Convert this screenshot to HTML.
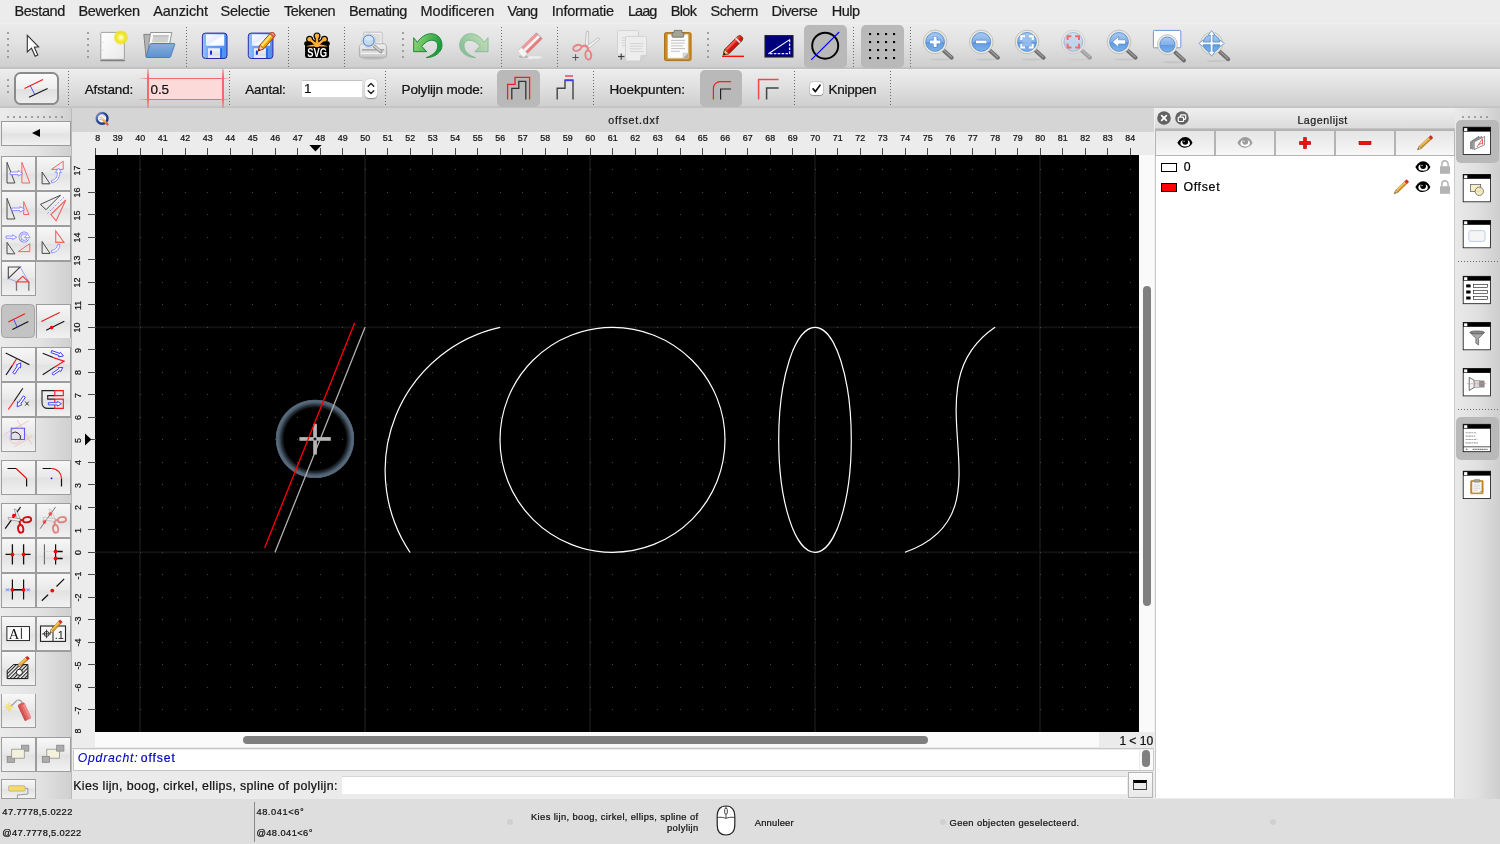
<!DOCTYPE html><html><head><meta charset="utf-8"><title>QCAD offset.dxf</title><style>
*{box-sizing:border-box;margin:0;padding:0}
html,body{width:1500px;height:844px;overflow:hidden;background:#ececec;font-family:"Liberation Sans",sans-serif;color:#111}
.a{position:absolute}
.t{position:absolute;white-space:nowrap;line-height:1;-webkit-text-stroke:0.22px currentColor;font-family:"Liberation Sans",sans-serif}
svg{position:absolute;overflow:visible}
.vsep{position:absolute;width:1px;background-image:linear-gradient(#6a6a6a 1px,transparent 1px);background-size:1px 3px}
.hsep{position:absolute;height:1px;background-image:linear-gradient(90deg,#6a6a6a 1px,transparent 1px);background-size:3px 1px}
.gd{position:absolute;width:2px;height:2px;background:#9a9a9a;border-radius:0.5px}
.tb{position:absolute;background:linear-gradient(#f6f6f6,#e6e6e6 50%,#dedede 52%,#ececec);border:1px solid #a9a9a9}

.tbf{position:absolute;background:linear-gradient(#f7f7f7,#e9e9e9 48%,#e2e2e2 52%,#f1f1f1)}
.chk{position:absolute;background:#b9b9b9;border-radius:5px}
</style></head><body><div id="root" style="position:absolute;left:0;top:0;width:1500px;height:844px;will-change:transform;transform:translateZ(0)">
<div class="a" style="left:0;top:0;width:1500px;height:23px;background:#ececec"></div>
<span class="t" style="left:14.40px;top:3.73px;font-size:14.5px;letter-spacing:-0.378px;color:#1c1c1c;">Bestand</span>
<span class="t" style="left:78.60px;top:3.73px;font-size:14.5px;letter-spacing:-0.445px;color:#1c1c1c;">Bewerken</span>
<span class="t" style="left:153.20px;top:3.73px;font-size:14.5px;letter-spacing:-0.102px;color:#1c1c1c;">Aanzicht</span>
<span class="t" style="left:220.60px;top:3.73px;font-size:14.5px;letter-spacing:-0.302px;color:#1c1c1c;">Selectie</span>
<span class="t" style="left:284.00px;top:3.73px;font-size:14.5px;letter-spacing:-0.561px;color:#1c1c1c;">Tekenen</span>
<span class="t" style="left:349.00px;top:3.73px;font-size:14.5px;letter-spacing:-0.409px;color:#1c1c1c;">Bemating</span>
<span class="t" style="left:420.60px;top:3.73px;font-size:14.5px;letter-spacing:-0.121px;color:#1c1c1c;">Modificeren</span>
<span class="t" style="left:507.60px;top:3.73px;font-size:14.5px;letter-spacing:-0.787px;color:#1c1c1c;">Vang</span>
<span class="t" style="left:551.80px;top:3.73px;font-size:14.5px;letter-spacing:-0.247px;color:#1c1c1c;">Informatie</span>
<span class="t" style="left:627.90px;top:3.73px;font-size:14.5px;letter-spacing:-0.922px;color:#1c1c1c;">Laag</span>
<span class="t" style="left:670.80px;top:3.73px;font-size:14.5px;letter-spacing:-0.671px;color:#1c1c1c;">Blok</span>
<span class="t" style="left:710.40px;top:3.73px;font-size:14.5px;letter-spacing:-0.423px;color:#1c1c1c;">Scherm</span>
<span class="t" style="left:771.60px;top:3.73px;font-size:14.5px;letter-spacing:-0.493px;color:#1c1c1c;">Diverse</span>
<span class="t" style="left:831.70px;top:3.73px;font-size:14.5px;letter-spacing:-0.486px;color:#1c1c1c;">Hulp</span>
<div class="a" style="left:0;top:23px;width:1500px;height:43.5px;background:linear-gradient(#f1f1f1,#ebebeb 3%,#e2e2e2 45%,#cecece)"></div><div class="a" style="left:0;top:66.5px;width:1500px;height:2.4px;background:linear-gradient(#c6c6c6,#bdbdbd)"></div>
<div class="a" style="left:0;top:68.9px;width:1500px;height:36.8px;background:linear-gradient(#f6f6f6,#ececec 3%,#e1e1e1 45%,#cfcfcf)"></div><div class="a" style="left:0;top:105.6px;width:1500px;height:2.4px;background:linear-gradient(#c9c9c9,#c1c1c1)"></div>
<div class="gd" style="left:7px;top:32px"></div>
<div class="gd" style="left:7px;top:38px"></div>
<div class="gd" style="left:7px;top:44px"></div>
<div class="gd" style="left:7px;top:50px"></div>
<div class="gd" style="left:7px;top:56px"></div>
<div class="gd" style="left:87px;top:32px"></div>
<div class="gd" style="left:87px;top:38px"></div>
<div class="gd" style="left:87px;top:44px"></div>
<div class="gd" style="left:87px;top:50px"></div>
<div class="gd" style="left:87px;top:56px"></div>
<div class="gd" style="left:402px;top:32px"></div>
<div class="gd" style="left:402px;top:38px"></div>
<div class="gd" style="left:402px;top:44px"></div>
<div class="gd" style="left:402px;top:50px"></div>
<div class="gd" style="left:402px;top:56px"></div>
<div class="gd" style="left:707px;top:32px"></div>
<div class="gd" style="left:707px;top:38px"></div>
<div class="gd" style="left:707px;top:44px"></div>
<div class="gd" style="left:707px;top:50px"></div>
<div class="gd" style="left:707px;top:56px"></div>
<div class="vsep" style="left:186px;top:27px;height:40px"></div>
<div class="vsep" style="left:288px;top:27px;height:40px"></div>
<div class="vsep" style="left:344px;top:27px;height:40px"></div>
<div class="vsep" style="left:501px;top:27px;height:40px"></div>
<div class="vsep" style="left:557px;top:27px;height:40px"></div>
<div class="vsep" style="left:853px;top:27px;height:40px"></div>
<div class="vsep" style="left:910px;top:27px;height:40px"></div>
<div class="chk" style="left:804px;top:25px;width:43px;height:43px"></div>
<div class="chk" style="left:861px;top:25px;width:43px;height:43px"></div>
<svg style="left:0;top:0" width="1500" height="70" viewBox="0 0 1500 70">
<defs>
<linearGradient id="gPage" x1="0" y1="0" x2="1" y2="1"><stop offset="0" stop-color="#ffffff"/><stop offset="1" stop-color="#e9e9e9"/></linearGradient>
<radialGradient id="gGlow"><stop offset="0" stop-color="#ffffff"/><stop offset="0.25" stop-color="#fbf68a"/><stop offset="0.6" stop-color="#efe61c"/><stop offset="0.85" stop-color="#ece22a" stop-opacity="0.75"/><stop offset="1" stop-color="#ece22a" stop-opacity="0"/></radialGradient>
<linearGradient id="gFold" x1="0" y1="0" x2="0" y2="1"><stop offset="0" stop-color="#88b0dc"/><stop offset="1" stop-color="#5c90d0"/></linearGradient>
<linearGradient id="gFloppy" x1="0" y1="0" x2="1" y2="0"><stop offset="0" stop-color="#9cc4fa"/><stop offset="0.25" stop-color="#6aa6f6"/><stop offset="1" stop-color="#4e8ef0"/></linearGradient>
<linearGradient id="gLabel" x1="0" y1="0" x2="1" y2="1"><stop offset="0" stop-color="#ffffff"/><stop offset="0.45" stop-color="#e4ecff"/><stop offset="0.6" stop-color="#ffffff"/><stop offset="1" stop-color="#eef2ff"/></linearGradient>
<linearGradient id="gShut" x1="0" y1="0" x2="0" y2="1"><stop offset="0" stop-color="#f4f4f8"/><stop offset="0.7" stop-color="#dcdce4"/><stop offset="1" stop-color="#f0f0f4"/></linearGradient>
<linearGradient id="gPencil" x1="0" y1="0" x2="0" y2="1"><stop offset="0" stop-color="#ffe060"/><stop offset="0.45" stop-color="#ffc010"/><stop offset="1" stop-color="#f08a00"/></linearGradient>
<linearGradient id="gUndo" x1="0" y1="0" x2="1" y2="0.3"><stop offset="0" stop-color="#9ad878"/><stop offset="0.5" stop-color="#5cbc5c"/><stop offset="1" stop-color="#1f9a40"/></linearGradient>
<linearGradient id="gLens" x1="0" y1="0" x2="0" y2="1"><stop offset="0" stop-color="#a9caf0"/><stop offset="0.5" stop-color="#82b0e8"/><stop offset="0.5" stop-color="#5f98dc"/><stop offset="1" stop-color="#7cb2ee"/></linearGradient>
<linearGradient id="gLensD" x1="0" y1="0" x2="0" y2="1"><stop offset="0" stop-color="#cfdcf0"/><stop offset="0.5" stop-color="#bccdea"/><stop offset="0.5" stop-color="#a9bfe4"/><stop offset="1" stop-color="#bcd0ee"/></linearGradient>
<linearGradient id="gPrn" x1="0" y1="0" x2="0" y2="1"><stop offset="0" stop-color="#f2f2f2"/><stop offset="1" stop-color="#c9c9c9"/></linearGradient>
<linearGradient id="gRedP" x1="0" y1="0" x2="0" y2="1"><stop offset="0" stop-color="#ff5a4a"/><stop offset="0.5" stop-color="#e01818"/><stop offset="1" stop-color="#b01010"/></linearGradient>
</defs>
<path d="M27.3 35.4 L27.3 52 L31.5 48.2 L35.2 56.3 L37.8 55.1 L34.3 47.3 L38.6 46.9 Z" fill="#fff" stroke="#333" stroke-width="1.1" stroke-linejoin="miter"/>
<rect x="100.8" y="32.4" width="23.6" height="27" rx="1" fill="url(#gPage)" stroke="#9a9a9a" stroke-width="0.9"/>
<path d="M100.5 59.9 Q100.6 60.6 101.5 60.6 L123.6 60.6 Q124.6 60.6 124.7 59.9" stroke="#808080" stroke-width="1.2" fill="none"/>
<path d="M102.3 42.3h1.2M102.3 49.8h1.2" stroke="#ccc" stroke-width="0.7"/>
<circle cx="120.9" cy="37.5" r="7.6" fill="url(#gGlow)"/>
<path d="M143.8 34.4 L150 34.4 L151 36 L160 36 L160 56.6 L146 56.6 Z" fill="#b4b4b4" stroke="#7a7a7a" stroke-width="0.9"/>
<path d="M150.6 32.5 L171.8 32.5 L169.6 43.6 L151.5 43.6 L147.2 55.5 Z" fill="#fafafa" stroke="#8a8a8a" stroke-width="0.9"/>
<path d="M153.2 35.5 L169 35.5 L167.6 42.6 L151.9 42.6 Z" fill="#d0d0d0"/><path d="M153 35.9h15.6" stroke="#bdbdbd" stroke-width="1.6"/>
<path d="M151.2 43.6 L174.2 43.6 Q175 43.6 174.7 44.6 L170.6 56.6 Q170.3 57.5 169.4 57.5 L146.8 57.5 Q145.8 57.5 146.2 56.5 L150 44.4 Q150.3 43.6 151.2 43.6 Z" fill="url(#gFold)" stroke="#3f78bf" stroke-width="0.9"/>
<rect x="202.4" y="33.1" width="24.6" height="25.4" rx="3" fill="url(#gFloppy)" stroke="#2a2aa4" stroke-width="1"/>
<rect x="206.0" y="34.300000000000004" width="18.2" height="11.4" fill="url(#gLabel)"/>
<rect x="208.0" y="48.3" width="12" height="9.6" fill="url(#gShut)"/>
<rect x="210.0" y="50.400000000000006" width="2" height="4.3" rx="0.6" fill="#0a34dc"/>
<rect x="220.20000000000002" y="48.3" width="1.8" height="9.6" fill="#2c66ee"/>
<rect x="248.3" y="33.1" width="24.6" height="25.4" rx="3" fill="url(#gFloppy)" stroke="#2a2aa4" stroke-width="1"/>
<rect x="251.9" y="34.300000000000004" width="18.2" height="11.4" fill="url(#gLabel)"/>
<rect x="253.9" y="48.3" width="12" height="9.6" fill="url(#gShut)"/>
<rect x="255.9" y="50.400000000000006" width="2" height="4.3" rx="0.6" fill="#0a34dc"/>
<rect x="266.1" y="48.3" width="1.8" height="9.6" fill="#2c66ee"/>
<g transform="translate(258.3,50.9) rotate(-48.5)"><path d="M0 0 L5.2 -2.7 L21.2 -2.7 Q23.6 -2.7 23.6 0 Q23.6 2.7 21.2 2.7 L5.2 2.7 Z" fill="url(#gPencil)" stroke="#b2331a" stroke-width="0.9" stroke-linejoin="round"/><path d="M0 0 L5.2 -2.7 L5.2 2.7 Z" fill="#f3d8b0" stroke="#b2331a" stroke-width="0.8" stroke-linejoin="round"/><path d="M0 0 L2 -1 L2 1 Z" fill="#222"/><path d="M20.4 -2.7 L20.4 2.7 M21.2 -2.7 Q23.6 -2.7 23.6 0 Q23.6 2.7 21.2 2.7 Z" fill="#e8a0a0" stroke="#c03a28" stroke-width="0.8"/><path d="M6 -0.6 L20 -0.6" stroke="#fff4a8" stroke-width="1"/></g>
<path d="M317 45 L317 35.9" stroke="#000" stroke-width="4.6" stroke-linecap="round"/><circle cx="317" cy="35.9" r="3.5" fill="#000"/>
<path d="M317 45 L309.6 39.2" stroke="#000" stroke-width="4.6" stroke-linecap="round"/><circle cx="309.6" cy="39.2" r="3.5" fill="#000"/>
<path d="M317 45 L324.4 39.2" stroke="#000" stroke-width="4.6" stroke-linecap="round"/><circle cx="324.4" cy="39.2" r="3.5" fill="#000"/>
<path d="M317 45 L306.4 43.6 M317 45 L327.6 43.6" stroke="#000" stroke-width="4.6" stroke-linecap="round"/>
<rect x="305" y="43.8" width="24" height="14.3" rx="2.4" fill="#000"/>
<path d="M317 45.4 L317 35.9" stroke="#fbb034" stroke-width="2.4" stroke-linecap="round"/><circle cx="317" cy="35.9" r="2.3" fill="#fbb034"/>
<path d="M317 45.4 L309.6 39.2" stroke="#fbb034" stroke-width="2.4" stroke-linecap="round"/><circle cx="309.6" cy="39.2" r="2.3" fill="#fbb034"/>
<path d="M317 45.4 L324.4 39.2" stroke="#fbb034" stroke-width="2.4" stroke-linecap="round"/><circle cx="324.4" cy="39.2" r="2.3" fill="#fbb034"/>
<path d="M306.8 45.9 Q312 44.2 317 44.2 Q322 44.2 327.2 45.9 L327.2 46.4 L306.8 46.4 Z" fill="#fbb034"/><circle cx="317" cy="44.6" r="2.6" fill="#fbb034"/>
<text transform="translate(307.3 57) scale(0.7 1)" font-family="Liberation Sans, sans-serif" font-weight="bold" font-size="13.4" fill="#fff">SVG</text>
<rect x="363.8" y="32.2" width="18.4" height="13" rx="0.8" fill="#f3f3f3" stroke="#b4b4b4" stroke-width="0.8"/>
<rect x="372.5" y="34" width="8" height="8.5" fill="#dedede"/>
<path d="M361.6 43.8 L384.4 43.8 Q386.6 45 386.6 47.5 L386.6 55.5 Q386.6 57.3 384.8 57.3 L361.2 57.3 Q359.4 57.3 359.4 55.5 L359.4 47.5 Q359.4 45 361.6 43.8 Z" fill="url(#gPrn)" stroke="#a9a9a9" stroke-width="0.9"/>
<path d="M362 49.8 L384 49.8" stroke="#a8a8a8" stroke-width="1.6"/><path d="M361 53.3 L385 53.3" stroke="#f6f6f6" stroke-width="1.2"/>
<ellipse cx="373" cy="58.6" rx="11" ry="1" fill="#999" opacity="0.45"/>
<path d="M373.8 45.8 L380.8 51.9" stroke="#999" stroke-width="3.2" stroke-linecap="round"/><path d="M374.4 46 L380.4 51.3" stroke="#dadada" stroke-width="1.2" stroke-linecap="round"/>
<circle cx="368.7" cy="40.7" r="7.1" fill="#ececec" stroke="#b8b8b8" stroke-width="0.5"/><circle cx="368.7" cy="40.7" r="5.5" fill="#c6d8ec" stroke="#5a8fd2" stroke-width="1.2"/><path d="M364.2 39.5 A4.6 4.6 0 0 1 373.2 39.5 Q369 41.8 364.2 39.5Z" fill="#dbe8f4" opacity="0.8"/>
<path d="M413.7 37.7 L417.3 42.3 C421 37 426 33.7 431 33.7 C438 33.7 442 39 442 45.3 C442 52 435 57.5 426.3 57.6 C433 55.5 437.7 51 437.7 46 C437.7 42 435 40.3 431.7 40.3 C428 40.3 424.5 43 421.7 46.3 L426.7 51.7 L413.7 51.7 Z" fill="url(#gUndo)" stroke="#178a38" stroke-width="1" stroke-linejoin="round"/>
<g transform="translate(901.7 0) scale(-1 1)" opacity="0.42"><path d="M413.7 37.7 L417.3 42.3 C421 37 426 33.7 431 33.7 C438 33.7 442 39 442 45.3 C442 52 435 57.5 426.3 57.6 C433 55.5 437.7 51 437.7 46 C437.7 42 435 40.3 431.7 40.3 C428 40.3 424.5 43 421.7 46.3 L426.7 51.7 L413.7 51.7 Z" fill="url(#gUndo)" stroke="#178a38" stroke-width="1" stroke-linejoin="round"/></g>
<ellipse cx="530" cy="57.4" rx="12.5" ry="1.5" fill="#fff" opacity="0.55"/><ellipse cx="523.5" cy="56.9" rx="5" ry="1.3" fill="#999" opacity="0.6"/>
<g transform="translate(520.5,54.3) rotate(-44.5)"><rect x="0" y="-4.4" width="26.4" height="8.8" rx="0.8" fill="#e28080"/><rect x="0" y="-4.4" width="26.4" height="3" fill="#ea9a9a"/><rect x="0" y="-1.4" width="26.4" height="2.9" fill="#f3f3f3"/><rect x="0" y="-4.4" width="5.4" height="8.8" fill="#f4f4f4" stroke="#cfcfcf" stroke-width="0.5"/><path d="M26.4 -4.4 L26.4 4.4" stroke="#a0a0a0" stroke-width="0.9"/></g>
<path d="M585.2 47 L586.4 31.6 L588.4 31 L588.3 47 Z" fill="#f2f2f2" stroke="#b0b0b0" stroke-width="0.7"/>
<path d="M587.2 45.8 L598.6 37.6 L599.6 39.4 L588.4 48.6 Z" fill="#f2f2f2" stroke="#b0b0b0" stroke-width="0.7"/>
<ellipse cx="577.3" cy="47.8" rx="4.3" ry="2.7" transform="rotate(-22 577.3 47.8)" fill="none" stroke="#e58686" stroke-width="2"/>
<ellipse cx="588.3" cy="55" rx="2.9" ry="4.6" transform="rotate(-6 588.3 55)" fill="none" stroke="#e58686" stroke-width="2"/>
<path d="M581.4 46.4 L585.6 45.6 L587.6 47.4 L588.6 51" stroke="#e58686" stroke-width="2.2" fill="none" stroke-linejoin="round"/>
<path d="M572.4 57.5h6.4M575.6 54.3v6.4" stroke="#444" stroke-width="0.9"/>
<path d="M618.5 30.5 L637.5 30.5 Q638.5 30.5 638.5 31.5 L638.5 49.1 L632.5 55.1 L618.5 55.1 Q617.5 55.1 617.5 54.1 L617.5 31.5 Q617.5 30.5 618.5 30.5 Z" fill="#ededed" stroke="#cdcdcd" stroke-width="0.8"/>
<path d="M638.5 49.1 L632.5 55.1 L632.9 49.5 Z" fill="#d2d2d2" stroke="#c4c4c4" stroke-width="0.5"/>
<path d="M621.9 37.70h14" stroke="#d3d3d3" stroke-width="1"/>
<path d="M621.9 40.35h13" stroke="#d3d3d3" stroke-width="1"/>
<path d="M621.9 43.00h12" stroke="#d3d3d3" stroke-width="1"/>
<path d="M621.9 45.65h14" stroke="#d3d3d3" stroke-width="1"/>
<path d="M626.5 36.4 L645.5 36.4 Q646.5 36.4 646.5 37.4 L646.5 55.0 L640.5 61.0 L626.5 61.0 Q625.5 61.0 625.5 60.0 L625.5 37.4 Q625.5 36.4 626.5 36.4 Z" fill="#ededed" stroke="#cdcdcd" stroke-width="0.8"/>
<path d="M646.5 55.0 L640.5 61.0 L640.9 55.4 Z" fill="#d2d2d2" stroke="#c4c4c4" stroke-width="0.5"/>
<path d="M629.9 43.60h14" stroke="#d3d3d3" stroke-width="1"/>
<path d="M629.9 46.25h13" stroke="#d3d3d3" stroke-width="1"/>
<path d="M629.9 48.90h12" stroke="#d3d3d3" stroke-width="1"/>
<path d="M629.9 51.55h14" stroke="#d3d3d3" stroke-width="1"/>
<path d="M618 56.6h6.4M621.2 53.4v6.4" stroke="#333" stroke-width="1"/>
<rect x="664.5" y="32.6" width="26.6" height="28" rx="1.6" fill="#c98a22" stroke="#a86c12" stroke-width="0.9"/>
<path d="M667.8 34.4 L688.2 34.4 L688.2 58.2 L667.8 58.2 Z" fill="#fbfbfb" stroke="#d8d8d8" stroke-width="0.5"/>
<path d="M688.2 53 L683 58.2 L688.2 58.2 Z" fill="#aaa"/><path d="M683 53 L688.2 53 L683 58.2 Z" fill="#d9d9d9" stroke="#bbb" stroke-width="0.4"/>
<path d="M671 40.40h14" stroke="#bcbcbc" stroke-width="0.9"/>
<path d="M671 43.12h13.6" stroke="#bcbcbc" stroke-width="0.9"/>
<path d="M671 45.84h12" stroke="#bcbcbc" stroke-width="0.9"/>
<path d="M671 48.56h14" stroke="#bcbcbc" stroke-width="0.9"/>
<path d="M671 51.28h9" stroke="#bcbcbc" stroke-width="0.9"/>
<path d="M674.2 30.4 L681.8 30.4 L681.8 32.2 L683.8 32.8 L683.8 36.2 Q683.8 37.2 682.8 37.2 L673 37.2 Q672 37.2 672 36.2 L672 32.8 L674.2 32.2 Z" fill="#a4a496" stroke="#66665c" stroke-width="0.8"/>
<path d="M722 56.3 L744 56.3" stroke="#ff0000" stroke-width="1.3"/>
<g transform="translate(723.3,55) rotate(-45)"><path d="M0 0 L5 -3.1 L23 -3.1 Q26.2 -3.1 26.2 0 Q26.2 3.1 23 3.1 L5 3.1 Z" fill="url(#gRedP)" stroke="#6a4a18" stroke-width="0.9" stroke-linejoin="round"/><path d="M0 0 L5 -3.1 L5 3.1 Z" fill="#ebc08a" stroke="#6a4a18" stroke-width="0.8" stroke-linejoin="round"/><path d="M0 0 L2.2 -1.3 L2.2 1.3 Z" fill="#111"/><rect x="19.6" y="-3.1" width="2" height="6.2" fill="#d8d8d8"/><path d="M6 -1.3 L19 -1.3" stroke="#ff8a7a" stroke-width="0.9"/></g>
<rect x="765" y="35.6" width="28" height="21.4" fill="#00007c" stroke="#222" stroke-width="1.1"/>
<path d="M768.4 53.7 L789.6 39.6" stroke="#fff" stroke-width="1.1"/><path d="M789.6 39.6 L789.6 53.7 L768.4 53.7" stroke="#e8e8ff" stroke-width="1.3" stroke-dasharray="2.6 1.3" fill="none"/>
<circle cx="825.2" cy="45.7" r="13" fill="none" stroke="#000" stroke-width="1.9"/>
<path d="M811.2 59.8 L839.2 32" stroke="#0000ff" stroke-width="1.1"/>
<rect x="869" y="33" width="2.1" height="2.1" fill="#000"/>
<rect x="869" y="41" width="2.1" height="2.1" fill="#000"/>
<rect x="869" y="49" width="2.1" height="2.1" fill="#000"/>
<rect x="869" y="57" width="2.1" height="2.1" fill="#000"/>
<rect x="877" y="33" width="2.1" height="2.1" fill="#000"/>
<rect x="877" y="41" width="2.1" height="2.1" fill="#000"/>
<rect x="877" y="49" width="2.1" height="2.1" fill="#000"/>
<rect x="877" y="57" width="2.1" height="2.1" fill="#000"/>
<rect x="885" y="33" width="2.1" height="2.1" fill="#000"/>
<rect x="885" y="41" width="2.1" height="2.1" fill="#000"/>
<rect x="885" y="49" width="2.1" height="2.1" fill="#000"/>
<rect x="885" y="57" width="2.1" height="2.1" fill="#000"/>
<rect x="893" y="33" width="2.1" height="2.1" fill="#000"/>
<rect x="893" y="41" width="2.1" height="2.1" fill="#000"/>
<rect x="893" y="49" width="2.1" height="2.1" fill="#000"/>
<rect x="893" y="57" width="2.1" height="2.1" fill="#000"/>
<g><ellipse cx="940.1" cy="59.5" rx="10" ry="1.1" fill="#888" opacity="0.18"/>
<path d="M943.1 49.9 L951.7 57.7" stroke="#6e6e6e" stroke-width="4" stroke-linecap="round"/><path d="M944.1 50.3 L951.3000000000001 56.9" stroke="#9a9a9a" stroke-width="1.4" stroke-linecap="round"/>
<circle cx="935.1" cy="41.9" r="10.700000000000001" fill="none" stroke="#e9e9e2" stroke-width="2.2"/><circle cx="935.1" cy="41.9" r="11.8" fill="none" stroke="#a8a8a0" stroke-width="0.6"/>
<circle cx="935.1" cy="41.9" r="9.4" fill="url(#gLens)" stroke="#4a86d0" stroke-width="0.8"/></g>
<path d="M929.6 41.9h11M935.1 36.4v11" stroke="#3f7fd0" stroke-width="4.4"/><path d="M929.9 41.9h10.4M935.1 36.7v10.4" stroke="#fff" stroke-width="3"/>
<g><ellipse cx="986.3" cy="59.5" rx="10" ry="1.1" fill="#888" opacity="0.18"/>
<path d="M989.3 49.9 L997.9 57.7" stroke="#6e6e6e" stroke-width="4" stroke-linecap="round"/><path d="M990.3 50.3 L997.5 56.9" stroke="#9a9a9a" stroke-width="1.4" stroke-linecap="round"/>
<circle cx="981.3" cy="41.9" r="10.700000000000001" fill="none" stroke="#e9e9e2" stroke-width="2.2"/><circle cx="981.3" cy="41.9" r="11.8" fill="none" stroke="#a8a8a0" stroke-width="0.6"/>
<circle cx="981.3" cy="41.9" r="9.4" fill="url(#gLens)" stroke="#4a86d0" stroke-width="0.8"/></g>
<path d="M975.6 41.9h11.4" stroke="#3f7fd0" stroke-width="4.2"/><path d="M976 41.9h10.6" stroke="#fff" stroke-width="2.8"/>
<g><ellipse cx="1032" cy="59.5" rx="10" ry="1.1" fill="#888" opacity="0.18"/>
<path d="M1035 49.9 L1043.6 57.7" stroke="#6e6e6e" stroke-width="4" stroke-linecap="round"/><path d="M1036 50.3 L1043.2 56.9" stroke="#9a9a9a" stroke-width="1.4" stroke-linecap="round"/>
<circle cx="1027" cy="41.9" r="10.700000000000001" fill="none" stroke="#e9e9e2" stroke-width="2.2"/><circle cx="1027" cy="41.9" r="11.8" fill="none" stroke="#a8a8a0" stroke-width="0.6"/>
<circle cx="1027" cy="41.9" r="9.4" fill="url(#gLens)" stroke="#4a86d0" stroke-width="0.8"/></g>
<rect x="1022.6" y="37.5" width="8.8" height="8.8" fill="#9cc0ee" opacity="0.8"/>
<path d="M1021.3 40v-3.8h3.8 M1032.7 40v-3.8h-3.8 M1021.3 43.8v3.8h3.8 M1032.7 43.8v3.8h-3.8" stroke="#fff" stroke-width="2" fill="none"/>
<g opacity="0.55"><ellipse cx="1078.3" cy="59.5" rx="10" ry="1.1" fill="#888" opacity="0.18"/>
<path d="M1081.3 49.9 L1089.8999999999999 57.7" stroke="#6e6e6e" stroke-width="4" stroke-linecap="round"/><path d="M1082.3 50.3 L1089.5 56.9" stroke="#9a9a9a" stroke-width="1.4" stroke-linecap="round"/>
<circle cx="1073.3" cy="41.9" r="10.700000000000001" fill="none" stroke="#e9e9e2" stroke-width="2.2"/><circle cx="1073.3" cy="41.9" r="11.8" fill="none" stroke="#a8a8a0" stroke-width="0.6"/>
<circle cx="1073.3" cy="41.9" r="9.4" fill="url(#gLensD)" stroke="#4a86d0" stroke-width="0.8"/></g>
<rect x="1069" y="37.6" width="8.6" height="8.6" fill="#c4d4ee" opacity="0.8"/>
<path d="M1067.6 40.1v-3.8h3.8 M1079 40.1v-3.8h-3.8 M1067.6 43.7v3.8h3.8 M1079 43.7v3.8h-3.8" stroke="#f06a6a" stroke-width="2" fill="none"/>
<g><ellipse cx="1124" cy="59.5" rx="10" ry="1.1" fill="#888" opacity="0.18"/>
<path d="M1127 49.9 L1135.6 57.7" stroke="#6e6e6e" stroke-width="4" stroke-linecap="round"/><path d="M1128 50.3 L1135.2 56.9" stroke="#9a9a9a" stroke-width="1.4" stroke-linecap="round"/>
<circle cx="1119" cy="41.9" r="10.700000000000001" fill="none" stroke="#e9e9e2" stroke-width="2.2"/><circle cx="1119" cy="41.9" r="11.8" fill="none" stroke="#a8a8a0" stroke-width="0.6"/>
<circle cx="1119" cy="41.9" r="9.4" fill="url(#gLens)" stroke="#4a86d0" stroke-width="0.8"/></g>
<path d="M1112.4 41.9 L1118.6 36.6 L1118.6 39.8 L1125.6 39.8 L1125.6 44 L1118.6 44 L1118.6 47.2 Z" fill="#fff" stroke="#3f7fd0" stroke-width="0.6"/>
<rect x="1153.4" y="30.4" width="27.4" height="17.4" rx="1" fill="#fff" stroke="#5a8fd6" stroke-width="0.9"/>
<g><ellipse cx="1172.4" cy="62.2" rx="10" ry="1.1" fill="#888" opacity="0.18"/>
<path d="M1175.4 52.6 L1184.0 60.400000000000006" stroke="#6e6e6e" stroke-width="4" stroke-linecap="round"/><path d="M1176.4 53.0 L1183.6000000000001 59.6" stroke="#9a9a9a" stroke-width="1.4" stroke-linecap="round"/>
<circle cx="1167.4" cy="44.6" r="8.9" fill="none" stroke="#e9e9e2" stroke-width="2.2"/><circle cx="1167.4" cy="44.6" r="10.0" fill="none" stroke="#a8a8a0" stroke-width="0.6"/>
<circle cx="1167.4" cy="44.6" r="7.6" fill="url(#gLens)" stroke="#4a86d0" stroke-width="0.8"/></g>
<g><ellipse cx="1216.6" cy="61.0" rx="10" ry="1.1" fill="#888" opacity="0.18"/>
<path d="M1219.6 51.4 L1228.1999999999998 59.2" stroke="#6e6e6e" stroke-width="4" stroke-linecap="round"/><path d="M1220.6 51.8 L1227.8 58.4" stroke="#9a9a9a" stroke-width="1.4" stroke-linecap="round"/>
<circle cx="1211.6" cy="43.4" r="9.9" fill="none" stroke="#e9e9e2" stroke-width="2.2"/><circle cx="1211.6" cy="43.4" r="11.0" fill="none" stroke="#a8a8a0" stroke-width="0.6"/>
<circle cx="1211.6" cy="43.4" r="8.6" fill="url(#gLens)" stroke="#4a86d0" stroke-width="0.8"/></g>
<path d="M1211.6 30.6 L1215 35.2 L1212.9 35.2 L1212.9 42.1 L1219.8 42.1 L1219.8 40 L1224.4 43.4 L1219.8 46.8 L1219.8 44.7 L1212.9 44.7 L1212.9 51.6 L1215 51.6 L1211.6 56.2 L1208.2 51.6 L1210.3 51.6 L1210.3 44.7 L1203.4 44.7 L1203.4 46.8 L1198.8 43.4 L1203.4 40 L1203.4 42.1 L1210.3 42.1 L1210.3 35.2 L1208.2 35.2 Z" fill="#fff" stroke="#4a86d0" stroke-width="0.7"/>
</svg>
<div class="gd" style="left:7px;top:79px"></div>
<div class="gd" style="left:7px;top:85px"></div>
<div class="gd" style="left:7px;top:91px"></div>
<div class="vsep" style="left:68px;top:71px;height:35px"></div>
<div class="vsep" style="left:229px;top:71px;height:35px"></div>
<div class="vsep" style="left:385px;top:71px;height:35px"></div>
<div class="vsep" style="left:593px;top:71px;height:35px"></div>
<div class="vsep" style="left:794px;top:71px;height:35px"></div>
<div class="vsep" style="left:890px;top:71px;height:35px"></div>
<div class="a" style="left:14px;top:72px;width:45px;height:33px;border:2.2px solid #8b8b8b;border-radius:6.5px;background:linear-gradient(#fbfbfb,#eeeeee 50%,#e0e0e0 52%,#ededed)"></div>
<span class="t" style="left:84.70px;top:82.77px;font-size:13.5px;letter-spacing:-0.129px;color:#111;">Afstand:</span>
<div class="a" style="left:148px;top:78px;width:75px;height:21px;background:#fddada"></div>
<div class="a" style="left:138px;top:77.5px;width:93px;height:1.5px;background:linear-gradient(90deg,rgba(240,80,80,0),#f26a6a 12%,#f26a6a 88%,rgba(240,80,80,0))"></div>
<div class="a" style="left:138px;top:98.5px;width:93px;height:1.5px;background:linear-gradient(90deg,rgba(240,80,80,0),#f26a6a 12%,#f26a6a 88%,rgba(240,80,80,0))"></div>
<div class="a" style="left:147.3px;top:69px;width:1.5px;height:39px;background:linear-gradient(rgba(240,80,80,0.3),#f26a6a 22%,#f26a6a 78%,rgba(240,80,80,0.3))"></div>
<div class="a" style="left:222.3px;top:69px;width:1.5px;height:39px;background:linear-gradient(rgba(240,80,80,0.3),#f26a6a 22%,#f26a6a 78%,rgba(240,80,80,0.3))"></div>
<span class="t" style="left:150.60px;top:82.77px;font-size:13.5px;letter-spacing:-0.183px;color:#111;">0.5</span>
<span class="t" style="left:245.30px;top:82.77px;font-size:13.5px;letter-spacing:-0.251px;color:#111;">Aantal:</span>
<div class="a" style="left:301.5px;top:79.5px;width:60.5px;height:17px;background:#fff;border-top:1px solid #c2c2c2"></div>
<span class="t" style="left:304.00px;top:81.97px;font-size:13.5px;letter-spacing:-4.008px;color:#111;">1</span>
<div class="a" style="left:365px;top:78.5px;width:12px;height:19px;background:#fff;border-radius:4px;box-shadow:0 0.5px 1px rgba(0,0,0,.35)"></div>
<svg style="left:365px;top:78.5px" width="12" height="19"><path d="M3.2 7.2 L6 4.4 L8.8 7.2 M3.2 11.8 L6 14.6 L8.8 11.8" fill="none" stroke="#222" stroke-width="1.4" stroke-linecap="round" stroke-linejoin="round"/></svg>
<span class="t" style="left:401.60px;top:82.77px;font-size:13.5px;letter-spacing:-0.178px;color:#111;">Polylijn mode:</span>
<div class="chk" style="left:497px;top:70px;width:43px;height:36.5px"></div>
<span class="t" style="left:609.40px;top:82.77px;font-size:13.5px;letter-spacing:-0.091px;color:#111;">Hoekpunten:</span>
<div class="chk" style="left:699.5px;top:70px;width:42.5px;height:36.5px"></div>
<div class="a" style="left:809.5px;top:81.5px;width:13px;height:13px;background:#fff;border-radius:3px;box-shadow:0 0 0 0.5px rgba(0,0,0,.18),0 0.5px 1px rgba(0,0,0,.25)"></div>
<svg style="left:809.5px;top:81.5px" width="13" height="13"><path d="M3.1 6.9 L5.4 9.6 L10 3.2" fill="none" stroke="#111" stroke-width="1.7" stroke-linecap="round" stroke-linejoin="round"/></svg>
<span class="t" style="left:828.60px;top:82.77px;font-size:13.5px;letter-spacing:-0.251px;color:#111;">Knippen</span>
<svg style="left:0;top:0" width="900" height="110" viewBox="0 0 900 110">
<path d="M24.5 88.6 L43 79.6" stroke="#f01818" stroke-width="1.1"/><path d="M29 97.2 L47.6 88.6" stroke="#111" stroke-width="1.1"/><path d="M30.2 85.6 L34.6 94.2" stroke="#3c3cff" stroke-width="0.9"/>
<path d="M507.6 99.4 L507.6 84.4 L515 84.4 L515 77.4 L529.6 77.4 L529.6 99.4" fill="none" stroke="#f02020" stroke-width="1.3"/>
<path d="M511.8 99.4 L511.8 88.3 L518.8 88.3 L518.8 81.3 L525.8 81.3 L525.8 99.4" fill="none" stroke="#333" stroke-width="1.3"/>
<path d="M557.2 99.4 L557.2 88.3 L565 88.3 L565 80.4 M573 80.4 L573 99.4" fill="none" stroke="#444" stroke-width="1.4"/>
<path d="M564.4 80.2 L573.6 80.2" stroke="#3c3cff" stroke-width="2"/><path d="M565 76 L573 76" stroke="#f05050" stroke-width="1.6"/>
<path d="M713.4 99.4 L713.4 88.4 A6.8 6.8 0 0 1 720.2 81.6 L731 81.6" fill="none" stroke="#f02020" stroke-width="1.2"/>
<path d="M720.6 99.4 L720.6 89 L731 89" fill="none" stroke="#222" stroke-width="1.2"/>
<path d="M758.6 99.4 L758.6 79.6 L778.6 79.6" fill="none" stroke="#f04848" stroke-width="1.5"/>
<path d="M766.6 99.4 L766.6 88 L778.6 88" fill="none" stroke="#444" stroke-width="1.5"/>
</svg>
<div class="a" style="left:0;top:108px;width:72px;height:691px;background:linear-gradient(90deg,#ebebeb,#e2e2e2 55%,#cfcfcf)"></div>
<div class="a" style="left:71px;top:108px;width:1px;height:691px;background:#b9b9b9"></div>
<div class="gd" style="left:6.5px;top:116px"></div>
<div class="gd" style="left:12.6px;top:116px"></div>
<div class="gd" style="left:18.6px;top:116px"></div>
<div class="gd" style="left:24.6px;top:116px"></div>
<div class="gd" style="left:30.7px;top:116px"></div>
<div class="gd" style="left:36.8px;top:116px"></div>
<div class="gd" style="left:42.8px;top:116px"></div>
<div class="gd" style="left:48.9px;top:116px"></div>
<div class="gd" style="left:54.9px;top:116px"></div>
<div class="gd" style="left:60.9px;top:116px"></div>
<div class="a" style="left:1px;top:120.5px;width:70.4px;height:25.2px;background:#9b9b9b"></div><div class="tbf" style="left:2.1px;top:121.6px;width:68.2px;height:23px"></div>
<svg style="left:31px;top:128px" width="10" height="10"><path d="M1 5 L9 1 L9 9 Z" fill="#000"/></svg>
<div class="a" style="left:1.1px;top:155.8px;width:70.0px;height:35.5px;background:#9d9d9d"></div>
<div class="a" style="left:1.1px;top:191.0px;width:70.0px;height:35.5px;background:#9d9d9d"></div>
<div class="a" style="left:1.1px;top:226.2px;width:70.0px;height:35.5px;background:#9d9d9d"></div>
<div class="a" style="left:1.1px;top:261.4px;width:35.0px;height:34.9px;background:#9d9d9d"></div>
<div class="tbf" style="left:2.1px;top:156.7px;width:32.9px;height:33.1px"></div>
<div class="tbf" style="left:37.0px;top:156.7px;width:32.9px;height:33.1px"></div>
<div class="tbf" style="left:2.1px;top:191.9px;width:32.9px;height:33.1px"></div>
<div class="tbf" style="left:37.0px;top:191.9px;width:32.9px;height:33.1px"></div>
<div class="tbf" style="left:2.1px;top:227.1px;width:32.9px;height:33.1px"></div>
<div class="tbf" style="left:37.0px;top:227.1px;width:32.9px;height:33.1px"></div>
<div class="tbf" style="left:2.1px;top:262.3px;width:32.9px;height:33.1px"></div>
<div class="a" style="left:36.1px;top:303.6px;width:34.9px;height:34.89999999999998px;background:#9d9d9d"></div>
<div class="a" style="left:1.2px;top:303.5px;width:34.2px;height:34.3px;background:#c3c3c3;border:1px solid #a4a4a4;border-radius:4.5px"></div>
<div class="tbf" style="left:37.0px;top:304.5px;width:33.0px;height:33.1px"></div>
<div class="a" style="left:1.1px;top:346.8px;width:70.0px;height:35.5px;background:#9d9d9d"></div>
<div class="a" style="left:1.1px;top:382.0px;width:70.0px;height:35.5px;background:#9d9d9d"></div>
<div class="a" style="left:1.1px;top:417.2px;width:35.0px;height:34.9px;background:#9d9d9d"></div>
<div class="tbf" style="left:2.1px;top:347.7px;width:32.9px;height:33.1px"></div>
<div class="tbf" style="left:37.0px;top:347.7px;width:32.9px;height:33.1px"></div>
<div class="tbf" style="left:2.1px;top:382.9px;width:32.9px;height:33.1px"></div>
<div class="tbf" style="left:37.0px;top:382.9px;width:32.9px;height:33.1px"></div>
<div class="tbf" style="left:2.1px;top:418.1px;width:32.9px;height:33.1px"></div>
<div class="a" style="left:1.1px;top:460.0px;width:70.0px;height:34.9px;background:#9d9d9d"></div>
<div class="tbf" style="left:2.1px;top:460.9px;width:32.9px;height:33.1px"></div>
<div class="tbf" style="left:37.0px;top:460.9px;width:32.9px;height:33.1px"></div>
<div class="a" style="left:1.1px;top:502.8px;width:70.0px;height:35.5px;background:#9d9d9d"></div>
<div class="a" style="left:1.1px;top:538.0px;width:70.0px;height:35.5px;background:#9d9d9d"></div>
<div class="a" style="left:1.1px;top:573.2px;width:70.0px;height:34.9px;background:#9d9d9d"></div>
<div class="tbf" style="left:2.1px;top:503.7px;width:32.9px;height:33.1px"></div>
<div class="tbf" style="left:37.0px;top:503.7px;width:32.9px;height:33.1px"></div>
<div class="tbf" style="left:2.1px;top:538.9px;width:32.9px;height:33.1px"></div>
<div class="tbf" style="left:37.0px;top:538.9px;width:32.9px;height:33.1px"></div>
<div class="tbf" style="left:2.1px;top:574.1px;width:32.9px;height:33.1px"></div>
<div class="tbf" style="left:37.0px;top:574.1px;width:32.9px;height:33.1px"></div>
<div class="a" style="left:1.1px;top:616.2px;width:70.0px;height:35.5px;background:#9d9d9d"></div>
<div class="a" style="left:1.1px;top:651.4px;width:35.0px;height:34.9px;background:#9d9d9d"></div>
<div class="tbf" style="left:2.1px;top:617.1px;width:32.9px;height:33.1px"></div>
<div class="tbf" style="left:37.0px;top:617.1px;width:32.9px;height:33.1px"></div>
<div class="tbf" style="left:2.1px;top:652.3px;width:32.9px;height:33.1px"></div>
<div class="a" style="left:1.1px;top:693.5px;width:35.0px;height:34.9px;background:#9d9d9d"></div>
<div class="tbf" style="left:2.1px;top:694.4px;width:32.9px;height:33.1px"></div>
<div class="a" style="left:1.1px;top:736.8px;width:70.0px;height:34.9px;background:#9d9d9d"></div>
<div class="tbf" style="left:2.1px;top:737.7px;width:32.9px;height:33.1px"></div>
<div class="tbf" style="left:37.0px;top:737.7px;width:32.9px;height:33.1px"></div>
<div class="a" style="left:1.1px;top:779.4px;width:35.0px;height:19.8px;background:#9d9d9d"></div>
<div class="tbf" style="left:2.1px;top:780.3px;width:32.9px;height:18px"></div>
<svg style="left:0;top:0" width="72" height="800" viewBox="0 0 72 800">
<defs>
<linearGradient id="lgPencil" x1="0" y1="0" x2="0" y2="1"><stop offset="0" stop-color="#ffe070"/><stop offset="0.5" stop-color="#f0b030"/><stop offset="1" stop-color="#c88418"/></linearGradient>
<pattern id="hatch" width="2.6" height="2.6" patternUnits="userSpaceOnUse" patternTransform="rotate(-45)"><rect width="2.6" height="2.6" fill="#f4f4f4"/><rect width="2.6" height="1.1" fill="#222"/></pattern>
</defs>
<path d="M7.0 162.3 L7.0 183.0 L14.9 183.0 Z" fill="none" stroke="#4a4a4a" stroke-width="1" stroke-linejoin="miter"/>
<path d="M21.9 162.3 L21.9 183.0 L29.8 183.0 Z" fill="none" stroke="#f46464" stroke-width="1" stroke-linejoin="miter"/>
<path transform="translate(10.2 173.3) rotate(0.0)" d="M0 -1.3 L8.0 -1.3 L8.0 -2.8 L12.6 0 L8.0 2.8 L8.0 1.3 L0 1.3 Z" fill="#fff" stroke="#8484ff" stroke-width="0.9" stroke-linejoin="miter"/>
<path d="M42.1 172.0 L42.1 183.8 L50.0 183.8 Z" fill="none" stroke="#4a4a4a" stroke-width="1" stroke-linejoin="miter"/>
<path d="M51.6 169.4 L63.2 161.2 L63.2 169.4 Z" fill="none" stroke="#f46464" stroke-width="1" stroke-linejoin="miter"/>
<path d="M51.4 180.4 C55.6 180 57.4 177 57.4 172.6 L55.4 172.6 L58.4 168 L61.4 172.6 L59.6 172.6 C59.6 178.4 56.6 182.2 51.6 182.8 Z" fill="#fff" stroke="#8484ff" stroke-width="0.9"/>
<path d="M7.0 198.3 L7.0 219.0 L14.9 219.0 Z" fill="none" stroke="#4a4a4a" stroke-width="1" stroke-linejoin="miter"/>
<path d="M23.7 201.6 L23.7 214.5 L29.0 214.5 Z" fill="none" stroke="#f46464" stroke-width="1" stroke-linejoin="miter"/>
<path transform="translate(11.8 209.3) rotate(0.0)" d="M0 -1.3 L8.2 -1.3 L8.2 -2.8 L12.8 0 L8.2 2.8 L8.2 1.3 L0 1.3 Z" fill="#fff" stroke="#8484ff" stroke-width="0.9" stroke-linejoin="miter"/>
<path d="M40.4 204.4 L60.5 195.2 L46.0 209.7 Z" fill="none" stroke="#4a4a4a" stroke-width="1" stroke-linejoin="miter"/>
<path d="M50.9 214.5 L65.8 200.0 L56.1 220.7 Z" fill="none" stroke="#f46464" stroke-width="1.1" stroke-linejoin="miter"/>
<path d="M47.4 213.6 L64 197" stroke="#8484ff" stroke-width="0.9" stroke-dasharray="2 1.6"/>
<path transform="translate(6.1 237.2) rotate(0.0)" d="M0 -1.1 L6.6 -1.1 L6.6 -2.4 L10.6 0 L6.6 2.4 L6.6 1.1 L0 1.1 Z" fill="#fff" stroke="#8484ff" stroke-width="0.9" stroke-linejoin="miter"/>
<path d="M27.2 234.2 A4.2 4.2 0 1 0 27.9 239" fill="none" stroke="#8484ff" stroke-width="2.6"/><path d="M27.2 234.2 A4.2 4.2 0 1 0 27.9 239" fill="none" stroke="#fff" stroke-width="1"/>
<path d="M24.6 237.6 L27.6 233.6 L30 237.8 Z" fill="#fff" stroke="#8484ff" stroke-width="0.8"/>
<path d="M7.0 242.4 L7.0 253.8 L14.9 253.8 Z" fill="none" stroke="#4a4a4a" stroke-width="1" stroke-linejoin="miter"/>
<path d="M18.2 251.6 L29.8 243.7 L29.8 251.6 Z" fill="none" stroke="#f46464" stroke-width="1" stroke-linejoin="miter"/>
<path d="M42.1 241.5 L42.1 253.4 L50.0 253.4 Z" fill="none" stroke="#4a4a4a" stroke-width="1" stroke-linejoin="miter"/>
<path d="M55.7 231.0 L55.7 242.4 L64.0 242.4 Z" fill="none" stroke="#f46464" stroke-width="1.1" stroke-linejoin="miter"/>
<path d="M51.3 250.4 C55 250.2 57.4 247.8 57.6 244.4 L59.9 244.4 C59.7 249.4 56.3 252.6 51.5 252.8 Z" fill="#fff" stroke="#8484ff" stroke-width="0.9"/>
<path d="M8.3 267.0 L20.2 267.0 L8.3 278.4 Z" fill="none" stroke="#4a4a4a" stroke-width="1.1" stroke-linejoin="miter"/>
<path d="M20.2 267 L28.5 281.5 M8.3 278.4 L16.4 281.6" stroke="#8484ff" stroke-width="0.7"/>
<path d="M16.5 282 L16.5 290.7 M28.8 282 L28.8 290.7" stroke="#757575" stroke-width="1.3"/>
<path d="M16.6 281.9 L22.8 276.4 L28.6 281.9 Z" fill="none" stroke="#f04444" stroke-width="1.25"/>
<path d="M8.3 322 L24.9 313.8" stroke="#f01818" stroke-width="1.1"/><path d="M12.4 329.6 L28.4 321.6" stroke="#111" stroke-width="1.1"/><path d="M13.8 319.5 L17.1 327" stroke="#3c3cff" stroke-width="0.9"/>
<path d="M41.3 321.6 L59.7 312.5" stroke="#f01818" stroke-width="1.1"/><path d="M46.2 330.2 L64.3 321.3" stroke="#111" stroke-width="1.1"/><circle cx="51.6" cy="327.6" r="1.8" fill="#f00"/>
<path d="M5.7 352.9 L29.4 364.7" stroke="#111" stroke-width="1.1"/><path d="M6 375 L12.1 365.9" stroke="#111" stroke-width="1.1"/><path d="M12.1 365.9 L16.6 358.8" stroke="#f01818" stroke-width="1.1"/>
<path transform="translate(13.8 373.4) rotate(-56.6)" d="M0 -1.2 L8.3 -1.2 L8.3 -2.6 L12.7 0 L8.3 2.6 L8.3 1.2 L0 1.2 Z" fill="#fff" stroke="#3c3cff" stroke-width="0.9" stroke-linejoin="miter"/>
<path d="M42.7 353.3 L53.3 357.6" stroke="#111" stroke-width="1.1"/><path d="M53.3 357.6 L64 361.2 L54.8 366.9" stroke="#f01818" stroke-width="1.2" fill="none"/><path d="M54.8 366.9 L42.7 374.7" stroke="#111" stroke-width="1.1"/>
<path transform="translate(51.4 351.6) rotate(20.1)" d="M0 -1.1 L8.6 -1.1 L8.6 -2.4 L12.8 0 L8.6 2.4 L8.6 1.1 L0 1.1 Z" fill="#fff" stroke="#3c3cff" stroke-width="0.9" stroke-linejoin="miter"/>
<path transform="translate(52.6 374.2) rotate(-33.7)" d="M0 -1.1 L8.1 -1.1 L8.1 -2.4 L12.3 0 L8.1 2.4 L8.1 1.1 L0 1.1 Z" fill="#fff" stroke="#3c3cff" stroke-width="0.9" stroke-linejoin="miter"/>
<path d="M22.8 388.2 L14.2 401" stroke="#111" stroke-width="1.1"/><path d="M14.2 401 L8.3 409.5" stroke="#f01818" stroke-width="1.1"/>
<path transform="translate(24.4 396.6) rotate(125.2)" d="M0 -1.2 L8.1 -1.2 L8.1 -2.6 L12.5 0 L8.1 2.6 L8.1 1.2 L0 1.2 Z" fill="#fff" stroke="#3c3cff" stroke-width="0.9" stroke-linejoin="miter"/>
<path d="M25.2 401.6 L28.8 405.6 M28.8 401.6 L25.2 405.6" stroke="#222" stroke-width="0.9"/>
<path d="M54.8 390.6 L42 390.6 L42 402.4 Q42 408.4 48 408.4 L54.8 408.4 M54.8 395.6 L47.7 395.6 L47.7 399.1 L54.8 399.1" fill="none" stroke="#222" stroke-width="1.1"/>
<path d="M54.8 390.6 L63.3 390.6 L63.3 395.6 L54.8 395.6 Z M54.8 399.1 L63.3 399.1 L63.3 408.4 L54.8 408.4 Z" fill="none" stroke="#f01818" stroke-width="1.1"/>
<path transform="translate(48.4 403.8) rotate(0.0)" d="M0 -1.1 L8.9 -1.1 L8.9 -2.4 L13.1 0 L8.9 2.4 L8.9 1.1 L0 1.1 Z" fill="#fff" stroke="#3c3cff" stroke-width="0.9" stroke-linejoin="miter"/>
<g stroke="#f4b4b4" stroke-width="0.7" fill="none"><path d="M4.5 434.2 L29 420.7 M17.2 420 L32 444.6 M14.2 446.9 L32 436.4"/><circle cx="15" cy="438.2" r="5.4"/></g>
<rect x="11.2" y="428.2" width="13.4" height="11.2" fill="none" stroke="#4646ff" stroke-width="0.9"/>
<path d="M11.9 433.2 A5.4 5.4 0 0 1 20.3 439.2" fill="none" stroke="#333" stroke-width="1"/>
<path d="M7.5 468.5 L16.1 468.5 M26.6 478.5 L26.6 486.5" stroke="#111" stroke-width="1.2"/><path d="M16.1 468.5 L26.6 478.5" stroke="#f01010" stroke-width="1.2"/>
<path d="M42.6 468.5 L51.5 468.5 M61.5 478.5 L61.5 486.5" stroke="#111" stroke-width="1.2"/><path d="M51.5 468.5 A10 10 0 0 1 61.5 478.5" stroke="#f01010" stroke-width="1.2" fill="none"/><circle cx="51.5" cy="478.3" r="0.9" fill="#00f"/>
<g transform="translate(0 0)">
<path d="M5.2 528.7 L20.6 507" stroke="#111" stroke-width="1.2"/>
<g opacity="1">
<path d="M14.1 509.2 L15.8 509.1 L20.2 518.8 L17.2 518.2 Z" fill="#f4f4f4" stroke="#777" stroke-width="0.6"/>
<path d="M8 517.3 L20.3 518.8 L19.9 521.4 L8.8 519.7 Z" fill="#f4f4f4" stroke="#777" stroke-width="0.6"/>
<ellipse cx="27.1" cy="519.7" rx="4.1" ry="2.6" transform="rotate(-8 27.1 519.7)" fill="none" stroke="#d01010" stroke-width="1.9"/>
<ellipse cx="20.7" cy="528.8" rx="2.6" ry="3.9" transform="rotate(-10 20.7 528.8)" fill="none" stroke="#d01010" stroke-width="1.9"/>
<path d="M20.2 520 L22.8 520.2 M19.6 521 L20 524.6" stroke="#d01010" stroke-width="2"/>
</g>
<circle cx="13.9" cy="515.7" r="1.9" fill="#f00" opacity="1"/>
</g>
<g transform="translate(34.9 0)">
<path d="M5.2 528.7 L20.6 507" stroke="#555" stroke-width="0.8"/>
<g opacity="0.45">
<path d="M14.1 509.2 L15.8 509.1 L20.2 518.8 L17.2 518.2 Z" fill="#f4f4f4" stroke="#777" stroke-width="0.6"/>
<path d="M8 517.3 L20.3 518.8 L19.9 521.4 L8.8 519.7 Z" fill="#f4f4f4" stroke="#777" stroke-width="0.6"/>
<ellipse cx="27.1" cy="519.7" rx="4.1" ry="2.6" transform="rotate(-8 27.1 519.7)" fill="none" stroke="#d01010" stroke-width="1.9"/>
<ellipse cx="20.7" cy="528.8" rx="2.6" ry="3.9" transform="rotate(-10 20.7 528.8)" fill="none" stroke="#d01010" stroke-width="1.9"/>
<path d="M20.2 520 L22.8 520.2 M19.6 521 L20 524.6" stroke="#d01010" stroke-width="2"/>
</g>
<circle cx="15.4" cy="513.8" r="1.9" fill="#f00" opacity="0.55"/>
<circle cx="9.5" cy="521.9" r="1.9" fill="#f00" opacity="0.55"/>
</g>
<path d="M12.4 544.3 L12.4 564.4 M23.6 544.3 L23.6 564.4 M5.5 554.4 L12.4 554.4 M23.6 554.4 L30.6 554.4" stroke="#111" stroke-width="1.3"/><path d="M12.4 554.4 L23.6 554.4" stroke="#aaa" stroke-width="0.6"/><circle cx="12.4" cy="554.4" r="1.9" fill="#f00"/><circle cx="23.6" cy="554.4" r="1.9" fill="#f00"/>
<path d="M44.4 544.3 L44.4 564.4" stroke="#333" stroke-width="0.8"/><path d="M55.6 544.3 L55.6 564.4" stroke="#111" stroke-width="1.2"/><path d="M55.6 551.4 L62.7 551.4 M55.6 558.5 L62.7 558.5" stroke="#111" stroke-width="1.5"/><path d="M44.4 551.4 L55.6 551.4 M44.4 558.5 L55.6 558.5" stroke="#bbb" stroke-width="0.6" stroke-dasharray="1.2 1"/><circle cx="55.6" cy="551.4" r="1.9" fill="#f00"/><circle cx="55.6" cy="558.5" r="1.9" fill="#f00"/>
<path d="M12.4 579.4 L12.4 599.5 M23.6 579.4 L23.6 599.5" stroke="#111" stroke-width="1.2"/><path d="M12.4 589.8 L23.6 589.8" stroke="#111" stroke-width="1.6"/><circle cx="12.4" cy="589.8" r="1.9" fill="#f00"/><circle cx="23.6" cy="589.8" r="1.9" fill="#f00"/>
<path d="M6 588.2 L9 591.4 M9 588.2 L6 591.4 M5.6 589.8 L10 589.8 M26.6 588.2 L29.6 591.4 M29.6 588.2 L26.6 591.4 M26 589.8 L30.4 589.8" stroke="#6a6aff" stroke-width="0.6"/>
<path d="M41.8 600.7 L48.1 594.8 M56.5 586.5 L64.2 578.8" stroke="#111" stroke-width="1.2"/><circle cx="52.3" cy="590.6" r="1.9" fill="#f00"/>
<rect x="6.9" y="626.6" width="22.6" height="14" fill="#fff" stroke="#111" stroke-width="0.9"/>
<text x="8.8" y="638.9" font-family="Liberation Serif, serif" font-size="14.6" fill="#111">A</text><path d="M21.4 627.8 L21.4 639" stroke="#111" stroke-width="0.9"/>
<rect x="40.5" y="626" width="25" height="15.4" fill="#f6f6f6" stroke="#222" stroke-width="1.1"/><path d="M53 626 L53 641.4" stroke="#222" stroke-width="1"/>
<circle cx="46.6" cy="633.9" r="2.5" fill="none" stroke="#222" stroke-width="0.9"/><path d="M42.2 633.9 L51 633.9 M46.6 629.6 L46.6 638.2" stroke="#222" stroke-width="0.9"/>
<text x="54.8" y="639" font-family="Liberation Sans, sans-serif" font-size="11" fill="#111">.1</text>
<g transform="translate(50 632.8) rotate(-46.7)"><path d="M0 0 L3.4 -1.6 L14.2 -1.6 L14.2 1.6 L3.4 1.6 Z" fill="url(#lgPencil)" stroke="#9a6a20" stroke-width="0.5"/><path d="M14.2 -1.6 L16.2 -1.6 Q16.8 0 16.2 1.6 L14.2 1.6 Z" fill="#e82020" stroke="#a01818" stroke-width="0.4"/><path d="M0 0 L3.4 -1.6 L3.4 1.6 Z" fill="#e8c898" stroke="#8a6a30" stroke-width="0.4"/><path d="M0 0 L1.3 -0.6 L1.3 0.6 Z" fill="#222"/></g>
<path d="M7.2 678.6 L7.2 670.5 L13.5 664.6 L27.9 664.6 L27.9 678.6 Z" fill="url(#hatch)" stroke="#111" stroke-width="1"/>
<circle cx="19.4" cy="672.3" r="3" fill="#fff" stroke="#111" stroke-width="1"/>
<g transform="translate(17.5 666.9) rotate(-41.2)"><path d="M0 0 L3.4 -1.6 L12.4 -1.6 L12.4 1.6 L3.4 1.6 Z" fill="url(#lgPencil)" stroke="#9a6a20" stroke-width="0.5"/><path d="M12.4 -1.6 L14.4 -1.6 Q15.0 0 14.4 1.6 L12.4 1.6 Z" fill="#e82020" stroke="#a01818" stroke-width="0.4"/><path d="M0 0 L3.4 -1.6 L3.4 1.6 Z" fill="#e8c898" stroke="#8a6a30" stroke-width="0.4"/><path d="M0 0 L1.3 -0.6 L1.3 0.6 Z" fill="#222"/></g>
<path d="M22.4 703.4 C21.6 699.6 17.6 699 15.6 701.6 C14.2 703.4 12.4 705.6 9.6 706.6" fill="none" stroke="#9a9a9a" stroke-width="1.1"/>
<g transform="translate(20.9 703.9) rotate(65)"><rect x="0" y="-3.6" width="17.4" height="7.2" rx="1.6" fill="#e46a6a"/><rect x="0" y="-3.6" width="17.4" height="2.4" rx="1.2" fill="#ef8c8c"/><rect x="0" y="1.4" width="17.4" height="2.2" rx="1.1" fill="#c85050"/><ellipse cx="0.6" cy="0" rx="1.2" ry="3.4" fill="#d65a5a"/></g>
<g stroke="#e6d23c" stroke-width="0.9"><path d="M9 702.6 L9 711.4 M4.6 707 L13.4 707 M5.9 703.9 L12.1 710.1 M12.1 703.9 L5.9 710.1"/></g><circle cx="9" cy="707" r="2.2" fill="#f7e27a"/>
<rect x="21.6" y="745.2" width="7.2" height="5.9" fill="#acacac" stroke="#858585" stroke-width="0.8"/>
<rect x="7.2" y="756.4" width="7.2" height="5.9" fill="#acacac" stroke="#858585" stroke-width="0.8"/>
<rect x="11.7" y="749.2" width="12.6" height="9" fill="#f6f1dc" stroke="#93938c" stroke-width="0.8"/>
<rect x="46.8" y="749.2" width="12.6" height="9" fill="#f6f1dc" stroke="#93938c" stroke-width="0.8"/>
<rect x="56.7" y="745.2" width="7.2" height="5.9" fill="#acacac" stroke="#858585" stroke-width="0.8"/>
<rect x="42.3" y="756.4" width="7.2" height="5.9" fill="#acacac" stroke="#858585" stroke-width="0.8"/>
<path d="M25.2 788.4 L27.9 788.4 L27.9 794 L17.4 795 L17.4 799" fill="none" stroke="#999" stroke-width="1"/><rect x="8.5" y="785.7" width="16.7" height="5.4" rx="1.4" fill="#f6da62" stroke="#a8a8a8" stroke-width="0.7"/>
</svg>
<div class="a" style="left:72px;top:108px;width:1082px;height:23.8px;background:#d5d5d5"></div>
<span class="t" style="left:608.30px;top:114.64px;font-size:10.7px;letter-spacing:0.804px;color:#1a1a1a;">offset.dxf</span>
<div class="a" style="left:72px;top:131.8px;width:1082px;height:23.2px;background:#ececec"></div>
<div class="a" style="left:72px;top:155px;width:23px;height:592px;background:#ececec"></div>
<div class="a" style="left:95px;top:132px;width:12px;height:14px;overflow:hidden"><span class="t" style="left:-4.64px;top:2.07px;font-size:8.9px;color:#111">38</span></div>
<span class="t" style="left:112.86px;top:134.07px;font-size:8.9px;color:#111">39</span>
<span class="t" style="left:135.36px;top:134.07px;font-size:8.9px;color:#111">40</span>
<span class="t" style="left:157.86px;top:134.07px;font-size:8.9px;color:#111">41</span>
<span class="t" style="left:180.36px;top:134.07px;font-size:8.9px;color:#111">42</span>
<span class="t" style="left:202.86px;top:134.07px;font-size:8.9px;color:#111">43</span>
<span class="t" style="left:225.36px;top:134.07px;font-size:8.9px;color:#111">44</span>
<span class="t" style="left:247.86px;top:134.07px;font-size:8.9px;color:#111">45</span>
<span class="t" style="left:270.36px;top:134.07px;font-size:8.9px;color:#111">46</span>
<span class="t" style="left:292.86px;top:134.07px;font-size:8.9px;color:#111">47</span>
<span class="t" style="left:315.36px;top:134.07px;font-size:8.9px;color:#111">48</span>
<span class="t" style="left:337.86px;top:134.07px;font-size:8.9px;color:#111">49</span>
<span class="t" style="left:360.36px;top:134.07px;font-size:8.9px;color:#111">50</span>
<span class="t" style="left:382.86px;top:134.07px;font-size:8.9px;color:#111">51</span>
<span class="t" style="left:405.36px;top:134.07px;font-size:8.9px;color:#111">52</span>
<span class="t" style="left:427.86px;top:134.07px;font-size:8.9px;color:#111">53</span>
<span class="t" style="left:450.36px;top:134.07px;font-size:8.9px;color:#111">54</span>
<span class="t" style="left:472.86px;top:134.07px;font-size:8.9px;color:#111">55</span>
<span class="t" style="left:495.36px;top:134.07px;font-size:8.9px;color:#111">56</span>
<span class="t" style="left:517.86px;top:134.07px;font-size:8.9px;color:#111">57</span>
<span class="t" style="left:540.36px;top:134.07px;font-size:8.9px;color:#111">58</span>
<span class="t" style="left:562.86px;top:134.07px;font-size:8.9px;color:#111">59</span>
<span class="t" style="left:585.36px;top:134.07px;font-size:8.9px;color:#111">60</span>
<span class="t" style="left:607.86px;top:134.07px;font-size:8.9px;color:#111">61</span>
<span class="t" style="left:630.36px;top:134.07px;font-size:8.9px;color:#111">62</span>
<span class="t" style="left:652.86px;top:134.07px;font-size:8.9px;color:#111">63</span>
<span class="t" style="left:675.36px;top:134.07px;font-size:8.9px;color:#111">64</span>
<span class="t" style="left:697.86px;top:134.07px;font-size:8.9px;color:#111">65</span>
<span class="t" style="left:720.36px;top:134.07px;font-size:8.9px;color:#111">66</span>
<span class="t" style="left:742.86px;top:134.07px;font-size:8.9px;color:#111">67</span>
<span class="t" style="left:765.36px;top:134.07px;font-size:8.9px;color:#111">68</span>
<span class="t" style="left:787.86px;top:134.07px;font-size:8.9px;color:#111">69</span>
<span class="t" style="left:810.36px;top:134.07px;font-size:8.9px;color:#111">70</span>
<span class="t" style="left:832.86px;top:134.07px;font-size:8.9px;color:#111">71</span>
<span class="t" style="left:855.36px;top:134.07px;font-size:8.9px;color:#111">72</span>
<span class="t" style="left:877.86px;top:134.07px;font-size:8.9px;color:#111">73</span>
<span class="t" style="left:900.36px;top:134.07px;font-size:8.9px;color:#111">74</span>
<span class="t" style="left:922.86px;top:134.07px;font-size:8.9px;color:#111">75</span>
<span class="t" style="left:945.36px;top:134.07px;font-size:8.9px;color:#111">76</span>
<span class="t" style="left:967.86px;top:134.07px;font-size:8.9px;color:#111">77</span>
<span class="t" style="left:990.36px;top:134.07px;font-size:8.9px;color:#111">78</span>
<span class="t" style="left:1012.86px;top:134.07px;font-size:8.9px;color:#111">79</span>
<span class="t" style="left:1035.36px;top:134.07px;font-size:8.9px;color:#111">80</span>
<span class="t" style="left:1057.86px;top:134.07px;font-size:8.9px;color:#111">81</span>
<span class="t" style="left:1080.36px;top:134.07px;font-size:8.9px;color:#111">82</span>
<span class="t" style="left:1102.86px;top:134.07px;font-size:8.9px;color:#111">83</span>
<span class="t" style="left:1125.36px;top:134.07px;font-size:8.9px;color:#111">84</span>
<div class="a" style="left:95px;top:148px;width:1px;height:7px;background:#4a4a4a"></div>
<div class="a" style="left:117px;top:148px;width:1px;height:7px;background:#4a4a4a"></div>
<div class="a" style="left:140px;top:148px;width:1px;height:7px;background:#4a4a4a"></div>
<div class="a" style="left:162px;top:148px;width:1px;height:7px;background:#4a4a4a"></div>
<div class="a" style="left:185px;top:148px;width:1px;height:7px;background:#4a4a4a"></div>
<div class="a" style="left:207px;top:148px;width:1px;height:7px;background:#4a4a4a"></div>
<div class="a" style="left:230px;top:148px;width:1px;height:7px;background:#4a4a4a"></div>
<div class="a" style="left:252px;top:148px;width:1px;height:7px;background:#4a4a4a"></div>
<div class="a" style="left:275px;top:148px;width:1px;height:7px;background:#4a4a4a"></div>
<div class="a" style="left:297px;top:148px;width:1px;height:7px;background:#4a4a4a"></div>
<div class="a" style="left:320px;top:148px;width:1px;height:7px;background:#4a4a4a"></div>
<div class="a" style="left:342px;top:148px;width:1px;height:7px;background:#4a4a4a"></div>
<div class="a" style="left:365px;top:148px;width:1px;height:7px;background:#4a4a4a"></div>
<div class="a" style="left:387px;top:148px;width:1px;height:7px;background:#4a4a4a"></div>
<div class="a" style="left:410px;top:148px;width:1px;height:7px;background:#4a4a4a"></div>
<div class="a" style="left:432px;top:148px;width:1px;height:7px;background:#4a4a4a"></div>
<div class="a" style="left:455px;top:148px;width:1px;height:7px;background:#4a4a4a"></div>
<div class="a" style="left:477px;top:148px;width:1px;height:7px;background:#4a4a4a"></div>
<div class="a" style="left:500px;top:148px;width:1px;height:7px;background:#4a4a4a"></div>
<div class="a" style="left:522px;top:148px;width:1px;height:7px;background:#4a4a4a"></div>
<div class="a" style="left:545px;top:148px;width:1px;height:7px;background:#4a4a4a"></div>
<div class="a" style="left:567px;top:148px;width:1px;height:7px;background:#4a4a4a"></div>
<div class="a" style="left:590px;top:148px;width:1px;height:7px;background:#4a4a4a"></div>
<div class="a" style="left:612px;top:148px;width:1px;height:7px;background:#4a4a4a"></div>
<div class="a" style="left:635px;top:148px;width:1px;height:7px;background:#4a4a4a"></div>
<div class="a" style="left:657px;top:148px;width:1px;height:7px;background:#4a4a4a"></div>
<div class="a" style="left:680px;top:148px;width:1px;height:7px;background:#4a4a4a"></div>
<div class="a" style="left:702px;top:148px;width:1px;height:7px;background:#4a4a4a"></div>
<div class="a" style="left:725px;top:148px;width:1px;height:7px;background:#4a4a4a"></div>
<div class="a" style="left:747px;top:148px;width:1px;height:7px;background:#4a4a4a"></div>
<div class="a" style="left:770px;top:148px;width:1px;height:7px;background:#4a4a4a"></div>
<div class="a" style="left:792px;top:148px;width:1px;height:7px;background:#4a4a4a"></div>
<div class="a" style="left:815px;top:148px;width:1px;height:7px;background:#4a4a4a"></div>
<div class="a" style="left:837px;top:148px;width:1px;height:7px;background:#4a4a4a"></div>
<div class="a" style="left:860px;top:148px;width:1px;height:7px;background:#4a4a4a"></div>
<div class="a" style="left:882px;top:148px;width:1px;height:7px;background:#4a4a4a"></div>
<div class="a" style="left:905px;top:148px;width:1px;height:7px;background:#4a4a4a"></div>
<div class="a" style="left:927px;top:148px;width:1px;height:7px;background:#4a4a4a"></div>
<div class="a" style="left:950px;top:148px;width:1px;height:7px;background:#4a4a4a"></div>
<div class="a" style="left:972px;top:148px;width:1px;height:7px;background:#4a4a4a"></div>
<div class="a" style="left:995px;top:148px;width:1px;height:7px;background:#4a4a4a"></div>
<div class="a" style="left:1017px;top:148px;width:1px;height:7px;background:#4a4a4a"></div>
<div class="a" style="left:1040px;top:148px;width:1px;height:7px;background:#4a4a4a"></div>
<div class="a" style="left:1062px;top:148px;width:1px;height:7px;background:#4a4a4a"></div>
<div class="a" style="left:1085px;top:148px;width:1px;height:7px;background:#4a4a4a"></div>
<div class="a" style="left:1107px;top:148px;width:1px;height:7px;background:#4a4a4a"></div>
<div class="a" style="left:1130px;top:148px;width:1px;height:7px;background:#4a4a4a"></div>
<svg style="left:94px;top:110px" width="18" height="18" viewBox="94 110 18 18"><defs><linearGradient id="qg" x1="0" y1="0" x2="1" y2="1"><stop offset="0" stop-color="#8c9cc8"/><stop offset="0.45" stop-color="#2c4694"/><stop offset="1" stop-color="#1a3484"/></linearGradient></defs><circle cx="102.1" cy="118.4" r="4.4" fill="#f6f6f6"/><path d="M99 117.6 h4 M101.2 115.6 v5" stroke="#bbb" stroke-width="0.6"/><path d="M98.9 119.8 l3 -0.6 M103.4 115.4 l1 1.6" stroke="#e88" stroke-width="0.6"/><circle cx="102.1" cy="118.4" r="5.4" fill="none" stroke="url(#qg)" stroke-width="2.4"/><path d="M102.6 118.9 L106.6 123.4" stroke="#f2a010" stroke-width="2.2" stroke-linecap="butt"/><path d="M102.9 118.9 L106.6 122.8" stroke="#ffd860" stroke-width="0.8"/><path d="M106.4 123.2 L107.6 124.5" stroke="#e05858" stroke-width="2.2" stroke-linecap="round"/><path d="M101.9 118.5 L103.4 118.9 L102.4 119.9 Z" fill="#f0d8a0"/></svg>
<svg style="left:309px;top:145px" width="13" height="7"><path d="M0.4 0 L12.6 0 L6.5 6.4 Z" fill="#000"/></svg>
<div class="a" style="left:72px;top:720px;width:16px;height:12.5px;overflow:hidden"><span class="t" style="left:2.45px;top:8.15px;width:7.91px;height:8.9px;font-size:8.9px;color:#111;transform:rotate(-90deg)">-8</span></div>
<div class="a" style="left:88px;top:709px;width:7px;height:1px;background:#4a4a4a"></div>
<span class="t" style="left:74.45px;top:705.65px;width:7.91px;height:8.9px;font-size:8.9px;color:#111;transform:rotate(-90deg)">-7</span>
<div class="a" style="left:88px;top:687px;width:7px;height:1px;background:#4a4a4a"></div>
<span class="t" style="left:74.45px;top:683.15px;width:7.91px;height:8.9px;font-size:8.9px;color:#111;transform:rotate(-90deg)">-6</span>
<div class="a" style="left:88px;top:664px;width:7px;height:1px;background:#4a4a4a"></div>
<span class="t" style="left:74.45px;top:660.65px;width:7.91px;height:8.9px;font-size:8.9px;color:#111;transform:rotate(-90deg)">-5</span>
<div class="a" style="left:88px;top:642px;width:7px;height:1px;background:#4a4a4a"></div>
<span class="t" style="left:74.45px;top:638.15px;width:7.91px;height:8.9px;font-size:8.9px;color:#111;transform:rotate(-90deg)">-4</span>
<div class="a" style="left:88px;top:619px;width:7px;height:1px;background:#4a4a4a"></div>
<span class="t" style="left:74.45px;top:615.65px;width:7.91px;height:8.9px;font-size:8.9px;color:#111;transform:rotate(-90deg)">-3</span>
<div class="a" style="left:88px;top:597px;width:7px;height:1px;background:#4a4a4a"></div>
<span class="t" style="left:74.45px;top:593.15px;width:7.91px;height:8.9px;font-size:8.9px;color:#111;transform:rotate(-90deg)">-2</span>
<div class="a" style="left:88px;top:574px;width:7px;height:1px;background:#4a4a4a"></div>
<span class="t" style="left:74.45px;top:570.65px;width:7.91px;height:8.9px;font-size:8.9px;color:#111;transform:rotate(-90deg)">-1</span>
<div class="a" style="left:88px;top:552px;width:7px;height:1px;background:#4a4a4a"></div>
<span class="t" style="left:75.93px;top:548.15px;width:4.94px;height:8.9px;font-size:8.9px;color:#111;transform:rotate(-90deg)">0</span>
<div class="a" style="left:88px;top:529px;width:7px;height:1px;background:#4a4a4a"></div>
<span class="t" style="left:75.93px;top:525.65px;width:4.94px;height:8.9px;font-size:8.9px;color:#111;transform:rotate(-90deg)">1</span>
<div class="a" style="left:88px;top:507px;width:7px;height:1px;background:#4a4a4a"></div>
<span class="t" style="left:75.93px;top:503.15px;width:4.94px;height:8.9px;font-size:8.9px;color:#111;transform:rotate(-90deg)">2</span>
<div class="a" style="left:88px;top:484px;width:7px;height:1px;background:#4a4a4a"></div>
<span class="t" style="left:75.93px;top:480.65px;width:4.94px;height:8.9px;font-size:8.9px;color:#111;transform:rotate(-90deg)">3</span>
<div class="a" style="left:88px;top:462px;width:7px;height:1px;background:#4a4a4a"></div>
<span class="t" style="left:75.93px;top:458.15px;width:4.94px;height:8.9px;font-size:8.9px;color:#111;transform:rotate(-90deg)">4</span>
<div class="a" style="left:88px;top:439px;width:7px;height:1px;background:#4a4a4a"></div>
<span class="t" style="left:75.93px;top:435.65px;width:4.94px;height:8.9px;font-size:8.9px;color:#111;transform:rotate(-90deg)">5</span>
<div class="a" style="left:88px;top:417px;width:7px;height:1px;background:#4a4a4a"></div>
<span class="t" style="left:75.93px;top:413.15px;width:4.94px;height:8.9px;font-size:8.9px;color:#111;transform:rotate(-90deg)">6</span>
<div class="a" style="left:88px;top:394px;width:7px;height:1px;background:#4a4a4a"></div>
<span class="t" style="left:75.93px;top:390.65px;width:4.94px;height:8.9px;font-size:8.9px;color:#111;transform:rotate(-90deg)">7</span>
<div class="a" style="left:88px;top:372px;width:7px;height:1px;background:#4a4a4a"></div>
<span class="t" style="left:75.93px;top:368.15px;width:4.94px;height:8.9px;font-size:8.9px;color:#111;transform:rotate(-90deg)">8</span>
<div class="a" style="left:88px;top:349px;width:7px;height:1px;background:#4a4a4a"></div>
<span class="t" style="left:75.93px;top:345.65px;width:4.94px;height:8.9px;font-size:8.9px;color:#111;transform:rotate(-90deg)">9</span>
<div class="a" style="left:88px;top:327px;width:7px;height:1px;background:#4a4a4a"></div>
<span class="t" style="left:73.46px;top:323.15px;width:9.88px;height:8.9px;font-size:8.9px;color:#111;transform:rotate(-90deg)">10</span>
<div class="a" style="left:88px;top:304px;width:7px;height:1px;background:#4a4a4a"></div>
<span class="t" style="left:73.79px;top:300.65px;width:9.22px;height:8.9px;font-size:8.9px;color:#111;transform:rotate(-90deg)">11</span>
<div class="a" style="left:88px;top:282px;width:7px;height:1px;background:#4a4a4a"></div>
<span class="t" style="left:73.46px;top:278.15px;width:9.88px;height:8.9px;font-size:8.9px;color:#111;transform:rotate(-90deg)">12</span>
<div class="a" style="left:88px;top:259px;width:7px;height:1px;background:#4a4a4a"></div>
<span class="t" style="left:73.46px;top:255.65px;width:9.88px;height:8.9px;font-size:8.9px;color:#111;transform:rotate(-90deg)">13</span>
<div class="a" style="left:88px;top:237px;width:7px;height:1px;background:#4a4a4a"></div>
<span class="t" style="left:73.46px;top:233.15px;width:9.88px;height:8.9px;font-size:8.9px;color:#111;transform:rotate(-90deg)">14</span>
<div class="a" style="left:88px;top:214px;width:7px;height:1px;background:#4a4a4a"></div>
<span class="t" style="left:73.46px;top:210.65px;width:9.88px;height:8.9px;font-size:8.9px;color:#111;transform:rotate(-90deg)">15</span>
<div class="a" style="left:88px;top:192px;width:7px;height:1px;background:#4a4a4a"></div>
<span class="t" style="left:73.46px;top:188.15px;width:9.88px;height:8.9px;font-size:8.9px;color:#111;transform:rotate(-90deg)">16</span>
<div class="a" style="left:88px;top:169px;width:7px;height:1px;background:#4a4a4a"></div>
<span class="t" style="left:73.46px;top:165.65px;width:9.88px;height:8.9px;font-size:8.9px;color:#111;transform:rotate(-90deg)">17</span>
<svg style="left:85px;top:433px" width="7" height="13"><path d="M0 0.4 L0 12.6 L6.4 6.5 Z" fill="#000"/></svg>
<svg style="left:95px;top:155px;overflow:hidden" width="1044" height="577" viewBox="0 0 1044 577">
<rect width="1044" height="577" fill="#000"/>
<rect x="44.0" y="0" width="2" height="577" fill="#121212"/>
<rect x="269.0" y="0" width="2" height="577" fill="#121212"/>
<rect x="494.0" y="0" width="2" height="577" fill="#121212"/>
<rect x="719.0" y="0" width="2" height="577" fill="#121212"/>
<rect x="944.0" y="0" width="2" height="577" fill="#121212"/>
<rect x="0" y="396.3" width="1044" height="2" fill="#121212"/>
<rect x="0" y="171.3" width="1044" height="2" fill="#121212"/>
<path d="M0 577.5h1M0 554.5h1M0 532.5h1M0 509.5h1M0 487.5h1M0 464.5h1M0 442.5h1M0 419.5h1M0 397.5h1M0 374.5h1M0 352.5h1M0 329.5h1M0 307.5h1M0 284.5h1M0 262.5h1M0 239.5h1M0 217.5h1M0 194.5h1M0 172.5h1M0 149.5h1M0 127.5h1M0 104.5h1M0 82.5h1M0 59.5h1M0 37.5h1M0 14.5h1M22 577.5h1M22 554.5h1M22 532.5h1M22 509.5h1M22 487.5h1M22 464.5h1M22 442.5h1M22 419.5h1M22 397.5h1M22 374.5h1M22 352.5h1M22 329.5h1M22 307.5h1M22 284.5h1M22 262.5h1M22 239.5h1M22 217.5h1M22 194.5h1M22 172.5h1M22 149.5h1M22 127.5h1M22 104.5h1M22 82.5h1M22 59.5h1M22 37.5h1M22 14.5h1M45 577.5h1M45 554.5h1M45 532.5h1M45 509.5h1M45 487.5h1M45 464.5h1M45 442.5h1M45 419.5h1M45 397.5h1M45 374.5h1M45 352.5h1M45 329.5h1M45 307.5h1M45 284.5h1M45 262.5h1M45 239.5h1M45 217.5h1M45 194.5h1M45 172.5h1M45 149.5h1M45 127.5h1M45 104.5h1M45 82.5h1M45 59.5h1M45 37.5h1M45 14.5h1M67 577.5h1M67 554.5h1M67 532.5h1M67 509.5h1M67 487.5h1M67 464.5h1M67 442.5h1M67 419.5h1M67 397.5h1M67 374.5h1M67 352.5h1M67 329.5h1M67 307.5h1M67 284.5h1M67 262.5h1M67 239.5h1M67 217.5h1M67 194.5h1M67 172.5h1M67 149.5h1M67 127.5h1M67 104.5h1M67 82.5h1M67 59.5h1M67 37.5h1M67 14.5h1M90 577.5h1M90 554.5h1M90 532.5h1M90 509.5h1M90 487.5h1M90 464.5h1M90 442.5h1M90 419.5h1M90 397.5h1M90 374.5h1M90 352.5h1M90 329.5h1M90 307.5h1M90 284.5h1M90 262.5h1M90 239.5h1M90 217.5h1M90 194.5h1M90 172.5h1M90 149.5h1M90 127.5h1M90 104.5h1M90 82.5h1M90 59.5h1M90 37.5h1M90 14.5h1M112 577.5h1M112 554.5h1M112 532.5h1M112 509.5h1M112 487.5h1M112 464.5h1M112 442.5h1M112 419.5h1M112 397.5h1M112 374.5h1M112 352.5h1M112 329.5h1M112 307.5h1M112 284.5h1M112 262.5h1M112 239.5h1M112 217.5h1M112 194.5h1M112 172.5h1M112 149.5h1M112 127.5h1M112 104.5h1M112 82.5h1M112 59.5h1M112 37.5h1M112 14.5h1M135 577.5h1M135 554.5h1M135 532.5h1M135 509.5h1M135 487.5h1M135 464.5h1M135 442.5h1M135 419.5h1M135 397.5h1M135 374.5h1M135 352.5h1M135 329.5h1M135 307.5h1M135 284.5h1M135 262.5h1M135 239.5h1M135 217.5h1M135 194.5h1M135 172.5h1M135 149.5h1M135 127.5h1M135 104.5h1M135 82.5h1M135 59.5h1M135 37.5h1M135 14.5h1M157 577.5h1M157 554.5h1M157 532.5h1M157 509.5h1M157 487.5h1M157 464.5h1M157 442.5h1M157 419.5h1M157 397.5h1M157 374.5h1M157 352.5h1M157 329.5h1M157 307.5h1M157 284.5h1M157 262.5h1M157 239.5h1M157 217.5h1M157 194.5h1M157 172.5h1M157 149.5h1M157 127.5h1M157 104.5h1M157 82.5h1M157 59.5h1M157 37.5h1M157 14.5h1M180 577.5h1M180 554.5h1M180 532.5h1M180 509.5h1M180 487.5h1M180 464.5h1M180 442.5h1M180 419.5h1M180 397.5h1M180 374.5h1M180 352.5h1M180 329.5h1M180 307.5h1M180 284.5h1M180 262.5h1M180 239.5h1M180 217.5h1M180 194.5h1M180 172.5h1M180 149.5h1M180 127.5h1M180 104.5h1M180 82.5h1M180 59.5h1M180 37.5h1M180 14.5h1M202 577.5h1M202 554.5h1M202 532.5h1M202 509.5h1M202 487.5h1M202 464.5h1M202 442.5h1M202 419.5h1M202 397.5h1M202 374.5h1M202 352.5h1M202 329.5h1M202 307.5h1M202 284.5h1M202 262.5h1M202 239.5h1M202 217.5h1M202 194.5h1M202 172.5h1M202 149.5h1M202 127.5h1M202 104.5h1M202 82.5h1M202 59.5h1M202 37.5h1M202 14.5h1M225 577.5h1M225 554.5h1M225 532.5h1M225 509.5h1M225 487.5h1M225 464.5h1M225 442.5h1M225 419.5h1M225 397.5h1M225 374.5h1M225 352.5h1M225 329.5h1M225 307.5h1M225 284.5h1M225 262.5h1M225 239.5h1M225 217.5h1M225 194.5h1M225 172.5h1M225 149.5h1M225 127.5h1M225 104.5h1M225 82.5h1M225 59.5h1M225 37.5h1M225 14.5h1M247 577.5h1M247 554.5h1M247 532.5h1M247 509.5h1M247 487.5h1M247 464.5h1M247 442.5h1M247 419.5h1M247 397.5h1M247 374.5h1M247 352.5h1M247 329.5h1M247 307.5h1M247 284.5h1M247 262.5h1M247 239.5h1M247 217.5h1M247 194.5h1M247 172.5h1M247 149.5h1M247 127.5h1M247 104.5h1M247 82.5h1M247 59.5h1M247 37.5h1M247 14.5h1M270 577.5h1M270 554.5h1M270 532.5h1M270 509.5h1M270 487.5h1M270 464.5h1M270 442.5h1M270 419.5h1M270 397.5h1M270 374.5h1M270 352.5h1M270 329.5h1M270 307.5h1M270 284.5h1M270 262.5h1M270 239.5h1M270 217.5h1M270 194.5h1M270 172.5h1M270 149.5h1M270 127.5h1M270 104.5h1M270 82.5h1M270 59.5h1M270 37.5h1M270 14.5h1M292 577.5h1M292 554.5h1M292 532.5h1M292 509.5h1M292 487.5h1M292 464.5h1M292 442.5h1M292 419.5h1M292 397.5h1M292 374.5h1M292 352.5h1M292 329.5h1M292 307.5h1M292 284.5h1M292 262.5h1M292 239.5h1M292 217.5h1M292 194.5h1M292 172.5h1M292 149.5h1M292 127.5h1M292 104.5h1M292 82.5h1M292 59.5h1M292 37.5h1M292 14.5h1M315 577.5h1M315 554.5h1M315 532.5h1M315 509.5h1M315 487.5h1M315 464.5h1M315 442.5h1M315 419.5h1M315 397.5h1M315 374.5h1M315 352.5h1M315 329.5h1M315 307.5h1M315 284.5h1M315 262.5h1M315 239.5h1M315 217.5h1M315 194.5h1M315 172.5h1M315 149.5h1M315 127.5h1M315 104.5h1M315 82.5h1M315 59.5h1M315 37.5h1M315 14.5h1M337 577.5h1M337 554.5h1M337 532.5h1M337 509.5h1M337 487.5h1M337 464.5h1M337 442.5h1M337 419.5h1M337 397.5h1M337 374.5h1M337 352.5h1M337 329.5h1M337 307.5h1M337 284.5h1M337 262.5h1M337 239.5h1M337 217.5h1M337 194.5h1M337 172.5h1M337 149.5h1M337 127.5h1M337 104.5h1M337 82.5h1M337 59.5h1M337 37.5h1M337 14.5h1M360 577.5h1M360 554.5h1M360 532.5h1M360 509.5h1M360 487.5h1M360 464.5h1M360 442.5h1M360 419.5h1M360 397.5h1M360 374.5h1M360 352.5h1M360 329.5h1M360 307.5h1M360 284.5h1M360 262.5h1M360 239.5h1M360 217.5h1M360 194.5h1M360 172.5h1M360 149.5h1M360 127.5h1M360 104.5h1M360 82.5h1M360 59.5h1M360 37.5h1M360 14.5h1M382 577.5h1M382 554.5h1M382 532.5h1M382 509.5h1M382 487.5h1M382 464.5h1M382 442.5h1M382 419.5h1M382 397.5h1M382 374.5h1M382 352.5h1M382 329.5h1M382 307.5h1M382 284.5h1M382 262.5h1M382 239.5h1M382 217.5h1M382 194.5h1M382 172.5h1M382 149.5h1M382 127.5h1M382 104.5h1M382 82.5h1M382 59.5h1M382 37.5h1M382 14.5h1M405 577.5h1M405 554.5h1M405 532.5h1M405 509.5h1M405 487.5h1M405 464.5h1M405 442.5h1M405 419.5h1M405 397.5h1M405 374.5h1M405 352.5h1M405 329.5h1M405 307.5h1M405 284.5h1M405 262.5h1M405 239.5h1M405 217.5h1M405 194.5h1M405 172.5h1M405 149.5h1M405 127.5h1M405 104.5h1M405 82.5h1M405 59.5h1M405 37.5h1M405 14.5h1M427 577.5h1M427 554.5h1M427 532.5h1M427 509.5h1M427 487.5h1M427 464.5h1M427 442.5h1M427 419.5h1M427 397.5h1M427 374.5h1M427 352.5h1M427 329.5h1M427 307.5h1M427 284.5h1M427 262.5h1M427 239.5h1M427 217.5h1M427 194.5h1M427 172.5h1M427 149.5h1M427 127.5h1M427 104.5h1M427 82.5h1M427 59.5h1M427 37.5h1M427 14.5h1M450 577.5h1M450 554.5h1M450 532.5h1M450 509.5h1M450 487.5h1M450 464.5h1M450 442.5h1M450 419.5h1M450 397.5h1M450 374.5h1M450 352.5h1M450 329.5h1M450 307.5h1M450 284.5h1M450 262.5h1M450 239.5h1M450 217.5h1M450 194.5h1M450 172.5h1M450 149.5h1M450 127.5h1M450 104.5h1M450 82.5h1M450 59.5h1M450 37.5h1M450 14.5h1M472 577.5h1M472 554.5h1M472 532.5h1M472 509.5h1M472 487.5h1M472 464.5h1M472 442.5h1M472 419.5h1M472 397.5h1M472 374.5h1M472 352.5h1M472 329.5h1M472 307.5h1M472 284.5h1M472 262.5h1M472 239.5h1M472 217.5h1M472 194.5h1M472 172.5h1M472 149.5h1M472 127.5h1M472 104.5h1M472 82.5h1M472 59.5h1M472 37.5h1M472 14.5h1M495 577.5h1M495 554.5h1M495 532.5h1M495 509.5h1M495 487.5h1M495 464.5h1M495 442.5h1M495 419.5h1M495 397.5h1M495 374.5h1M495 352.5h1M495 329.5h1M495 307.5h1M495 284.5h1M495 262.5h1M495 239.5h1M495 217.5h1M495 194.5h1M495 172.5h1M495 149.5h1M495 127.5h1M495 104.5h1M495 82.5h1M495 59.5h1M495 37.5h1M495 14.5h1M517 577.5h1M517 554.5h1M517 532.5h1M517 509.5h1M517 487.5h1M517 464.5h1M517 442.5h1M517 419.5h1M517 397.5h1M517 374.5h1M517 352.5h1M517 329.5h1M517 307.5h1M517 284.5h1M517 262.5h1M517 239.5h1M517 217.5h1M517 194.5h1M517 172.5h1M517 149.5h1M517 127.5h1M517 104.5h1M517 82.5h1M517 59.5h1M517 37.5h1M517 14.5h1M540 577.5h1M540 554.5h1M540 532.5h1M540 509.5h1M540 487.5h1M540 464.5h1M540 442.5h1M540 419.5h1M540 397.5h1M540 374.5h1M540 352.5h1M540 329.5h1M540 307.5h1M540 284.5h1M540 262.5h1M540 239.5h1M540 217.5h1M540 194.5h1M540 172.5h1M540 149.5h1M540 127.5h1M540 104.5h1M540 82.5h1M540 59.5h1M540 37.5h1M540 14.5h1M562 577.5h1M562 554.5h1M562 532.5h1M562 509.5h1M562 487.5h1M562 464.5h1M562 442.5h1M562 419.5h1M562 397.5h1M562 374.5h1M562 352.5h1M562 329.5h1M562 307.5h1M562 284.5h1M562 262.5h1M562 239.5h1M562 217.5h1M562 194.5h1M562 172.5h1M562 149.5h1M562 127.5h1M562 104.5h1M562 82.5h1M562 59.5h1M562 37.5h1M562 14.5h1M585 577.5h1M585 554.5h1M585 532.5h1M585 509.5h1M585 487.5h1M585 464.5h1M585 442.5h1M585 419.5h1M585 397.5h1M585 374.5h1M585 352.5h1M585 329.5h1M585 307.5h1M585 284.5h1M585 262.5h1M585 239.5h1M585 217.5h1M585 194.5h1M585 172.5h1M585 149.5h1M585 127.5h1M585 104.5h1M585 82.5h1M585 59.5h1M585 37.5h1M585 14.5h1M607 577.5h1M607 554.5h1M607 532.5h1M607 509.5h1M607 487.5h1M607 464.5h1M607 442.5h1M607 419.5h1M607 397.5h1M607 374.5h1M607 352.5h1M607 329.5h1M607 307.5h1M607 284.5h1M607 262.5h1M607 239.5h1M607 217.5h1M607 194.5h1M607 172.5h1M607 149.5h1M607 127.5h1M607 104.5h1M607 82.5h1M607 59.5h1M607 37.5h1M607 14.5h1M630 577.5h1M630 554.5h1M630 532.5h1M630 509.5h1M630 487.5h1M630 464.5h1M630 442.5h1M630 419.5h1M630 397.5h1M630 374.5h1M630 352.5h1M630 329.5h1M630 307.5h1M630 284.5h1M630 262.5h1M630 239.5h1M630 217.5h1M630 194.5h1M630 172.5h1M630 149.5h1M630 127.5h1M630 104.5h1M630 82.5h1M630 59.5h1M630 37.5h1M630 14.5h1M652 577.5h1M652 554.5h1M652 532.5h1M652 509.5h1M652 487.5h1M652 464.5h1M652 442.5h1M652 419.5h1M652 397.5h1M652 374.5h1M652 352.5h1M652 329.5h1M652 307.5h1M652 284.5h1M652 262.5h1M652 239.5h1M652 217.5h1M652 194.5h1M652 172.5h1M652 149.5h1M652 127.5h1M652 104.5h1M652 82.5h1M652 59.5h1M652 37.5h1M652 14.5h1M675 577.5h1M675 554.5h1M675 532.5h1M675 509.5h1M675 487.5h1M675 464.5h1M675 442.5h1M675 419.5h1M675 397.5h1M675 374.5h1M675 352.5h1M675 329.5h1M675 307.5h1M675 284.5h1M675 262.5h1M675 239.5h1M675 217.5h1M675 194.5h1M675 172.5h1M675 149.5h1M675 127.5h1M675 104.5h1M675 82.5h1M675 59.5h1M675 37.5h1M675 14.5h1M697 577.5h1M697 554.5h1M697 532.5h1M697 509.5h1M697 487.5h1M697 464.5h1M697 442.5h1M697 419.5h1M697 397.5h1M697 374.5h1M697 352.5h1M697 329.5h1M697 307.5h1M697 284.5h1M697 262.5h1M697 239.5h1M697 217.5h1M697 194.5h1M697 172.5h1M697 149.5h1M697 127.5h1M697 104.5h1M697 82.5h1M697 59.5h1M697 37.5h1M697 14.5h1M720 577.5h1M720 554.5h1M720 532.5h1M720 509.5h1M720 487.5h1M720 464.5h1M720 442.5h1M720 419.5h1M720 397.5h1M720 374.5h1M720 352.5h1M720 329.5h1M720 307.5h1M720 284.5h1M720 262.5h1M720 239.5h1M720 217.5h1M720 194.5h1M720 172.5h1M720 149.5h1M720 127.5h1M720 104.5h1M720 82.5h1M720 59.5h1M720 37.5h1M720 14.5h1M742 577.5h1M742 554.5h1M742 532.5h1M742 509.5h1M742 487.5h1M742 464.5h1M742 442.5h1M742 419.5h1M742 397.5h1M742 374.5h1M742 352.5h1M742 329.5h1M742 307.5h1M742 284.5h1M742 262.5h1M742 239.5h1M742 217.5h1M742 194.5h1M742 172.5h1M742 149.5h1M742 127.5h1M742 104.5h1M742 82.5h1M742 59.5h1M742 37.5h1M742 14.5h1M765 577.5h1M765 554.5h1M765 532.5h1M765 509.5h1M765 487.5h1M765 464.5h1M765 442.5h1M765 419.5h1M765 397.5h1M765 374.5h1M765 352.5h1M765 329.5h1M765 307.5h1M765 284.5h1M765 262.5h1M765 239.5h1M765 217.5h1M765 194.5h1M765 172.5h1M765 149.5h1M765 127.5h1M765 104.5h1M765 82.5h1M765 59.5h1M765 37.5h1M765 14.5h1M787 577.5h1M787 554.5h1M787 532.5h1M787 509.5h1M787 487.5h1M787 464.5h1M787 442.5h1M787 419.5h1M787 397.5h1M787 374.5h1M787 352.5h1M787 329.5h1M787 307.5h1M787 284.5h1M787 262.5h1M787 239.5h1M787 217.5h1M787 194.5h1M787 172.5h1M787 149.5h1M787 127.5h1M787 104.5h1M787 82.5h1M787 59.5h1M787 37.5h1M787 14.5h1M810 577.5h1M810 554.5h1M810 532.5h1M810 509.5h1M810 487.5h1M810 464.5h1M810 442.5h1M810 419.5h1M810 397.5h1M810 374.5h1M810 352.5h1M810 329.5h1M810 307.5h1M810 284.5h1M810 262.5h1M810 239.5h1M810 217.5h1M810 194.5h1M810 172.5h1M810 149.5h1M810 127.5h1M810 104.5h1M810 82.5h1M810 59.5h1M810 37.5h1M810 14.5h1M832 577.5h1M832 554.5h1M832 532.5h1M832 509.5h1M832 487.5h1M832 464.5h1M832 442.5h1M832 419.5h1M832 397.5h1M832 374.5h1M832 352.5h1M832 329.5h1M832 307.5h1M832 284.5h1M832 262.5h1M832 239.5h1M832 217.5h1M832 194.5h1M832 172.5h1M832 149.5h1M832 127.5h1M832 104.5h1M832 82.5h1M832 59.5h1M832 37.5h1M832 14.5h1M855 577.5h1M855 554.5h1M855 532.5h1M855 509.5h1M855 487.5h1M855 464.5h1M855 442.5h1M855 419.5h1M855 397.5h1M855 374.5h1M855 352.5h1M855 329.5h1M855 307.5h1M855 284.5h1M855 262.5h1M855 239.5h1M855 217.5h1M855 194.5h1M855 172.5h1M855 149.5h1M855 127.5h1M855 104.5h1M855 82.5h1M855 59.5h1M855 37.5h1M855 14.5h1M877 577.5h1M877 554.5h1M877 532.5h1M877 509.5h1M877 487.5h1M877 464.5h1M877 442.5h1M877 419.5h1M877 397.5h1M877 374.5h1M877 352.5h1M877 329.5h1M877 307.5h1M877 284.5h1M877 262.5h1M877 239.5h1M877 217.5h1M877 194.5h1M877 172.5h1M877 149.5h1M877 127.5h1M877 104.5h1M877 82.5h1M877 59.5h1M877 37.5h1M877 14.5h1M900 577.5h1M900 554.5h1M900 532.5h1M900 509.5h1M900 487.5h1M900 464.5h1M900 442.5h1M900 419.5h1M900 397.5h1M900 374.5h1M900 352.5h1M900 329.5h1M900 307.5h1M900 284.5h1M900 262.5h1M900 239.5h1M900 217.5h1M900 194.5h1M900 172.5h1M900 149.5h1M900 127.5h1M900 104.5h1M900 82.5h1M900 59.5h1M900 37.5h1M900 14.5h1M922 577.5h1M922 554.5h1M922 532.5h1M922 509.5h1M922 487.5h1M922 464.5h1M922 442.5h1M922 419.5h1M922 397.5h1M922 374.5h1M922 352.5h1M922 329.5h1M922 307.5h1M922 284.5h1M922 262.5h1M922 239.5h1M922 217.5h1M922 194.5h1M922 172.5h1M922 149.5h1M922 127.5h1M922 104.5h1M922 82.5h1M922 59.5h1M922 37.5h1M922 14.5h1M945 577.5h1M945 554.5h1M945 532.5h1M945 509.5h1M945 487.5h1M945 464.5h1M945 442.5h1M945 419.5h1M945 397.5h1M945 374.5h1M945 352.5h1M945 329.5h1M945 307.5h1M945 284.5h1M945 262.5h1M945 239.5h1M945 217.5h1M945 194.5h1M945 172.5h1M945 149.5h1M945 127.5h1M945 104.5h1M945 82.5h1M945 59.5h1M945 37.5h1M945 14.5h1M967 577.5h1M967 554.5h1M967 532.5h1M967 509.5h1M967 487.5h1M967 464.5h1M967 442.5h1M967 419.5h1M967 397.5h1M967 374.5h1M967 352.5h1M967 329.5h1M967 307.5h1M967 284.5h1M967 262.5h1M967 239.5h1M967 217.5h1M967 194.5h1M967 172.5h1M967 149.5h1M967 127.5h1M967 104.5h1M967 82.5h1M967 59.5h1M967 37.5h1M967 14.5h1M990 577.5h1M990 554.5h1M990 532.5h1M990 509.5h1M990 487.5h1M990 464.5h1M990 442.5h1M990 419.5h1M990 397.5h1M990 374.5h1M990 352.5h1M990 329.5h1M990 307.5h1M990 284.5h1M990 262.5h1M990 239.5h1M990 217.5h1M990 194.5h1M990 172.5h1M990 149.5h1M990 127.5h1M990 104.5h1M990 82.5h1M990 59.5h1M990 37.5h1M990 14.5h1M1012 577.5h1M1012 554.5h1M1012 532.5h1M1012 509.5h1M1012 487.5h1M1012 464.5h1M1012 442.5h1M1012 419.5h1M1012 397.5h1M1012 374.5h1M1012 352.5h1M1012 329.5h1M1012 307.5h1M1012 284.5h1M1012 262.5h1M1012 239.5h1M1012 217.5h1M1012 194.5h1M1012 172.5h1M1012 149.5h1M1012 127.5h1M1012 104.5h1M1012 82.5h1M1012 59.5h1M1012 37.5h1M1012 14.5h1M1035 577.5h1M1035 554.5h1M1035 532.5h1M1035 509.5h1M1035 487.5h1M1035 464.5h1M1035 442.5h1M1035 419.5h1M1035 397.5h1M1035 374.5h1M1035 352.5h1M1035 329.5h1M1035 307.5h1M1035 284.5h1M1035 262.5h1M1035 239.5h1M1035 217.5h1M1035 194.5h1M1035 172.5h1M1035 149.5h1M1035 127.5h1M1035 104.5h1M1035 82.5h1M1035 59.5h1M1035 37.5h1M1035 14.5h1" stroke="#474747" stroke-width="1" fill="none"/>
<defs><radialGradient id="rg" gradientUnits="userSpaceOnUse" cx="220.0" cy="283.9" r="40"><stop offset="0.77" stop-color="#56697b" stop-opacity="0"/><stop offset="0.84" stop-color="#56697b" stop-opacity="0.4"/><stop offset="0.9" stop-color="#5a6e80" stop-opacity="0.85"/><stop offset="0.95" stop-color="#5e7285" stop-opacity="1"/><stop offset="0.975" stop-color="#4f6274" stop-opacity="0.9"/><stop offset="0.99" stop-color="#4f6274" stop-opacity="0"/></radialGradient></defs>
<circle cx="220.0" cy="283.9" r="40" fill="url(#rg)"/>
<circle cx="220.0" cy="283.9" r="33.2" fill="none" stroke="#2c3a48" stroke-width="0.5" opacity="0.35"/>
<circle cx="220.0" cy="283.9" r="34.7" fill="none" stroke="#2c3a48" stroke-width="0.5" opacity="0.3"/>
<circle cx="220.0" cy="283.9" r="36.1" fill="none" stroke="#2c3a48" stroke-width="0.5" opacity="0.3"/>
<circle cx="220.0" cy="283.9" r="37.5" fill="none" stroke="#2c3a48" stroke-width="0.5" opacity="0.25"/>
<path d="M270.0 172.3 L180.0 397.3" stroke="#b0b0b0" stroke-width="1.3" fill="none"/>
<rect x="204.4" y="282.1" width="31.4" height="3.7" fill="#b6b6b6"/>
<rect x="218.2" y="268.7" width="3.7" height="30.8" fill="#b6b6b6"/>
<circle cx="220.0" cy="283.9" r="1.5" fill="#000" stroke="#999" stroke-width="0.5"/>
<path d="M259.6 168.1 L169.6 393.1" stroke="#ff0000" stroke-width="1.3" fill="none"/>
<path d="M405.0 172.3 A146.8 146.8 0 0 0 315.0 397.3" stroke="#fff" stroke-width="1.2" fill="none"/>
<circle cx="517.5" cy="284.8" r="112.5" stroke="#fff" stroke-width="1.2" fill="none"/>
<ellipse cx="720.0" cy="284.8" rx="36.3" ry="112.5" stroke="#fff" stroke-width="1.2" fill="none"/>
<path d="M810.0 397.3 C922.5 357.5 809.0 233.8 900.0 172.3" stroke="#fff" stroke-width="1.2" fill="none"/>
</svg>
<div class="a" style="left:1139px;top:155px;width:15px;height:577px;background:#fafafa"></div>
<div class="a" style="left:1143px;top:286px;width:8px;height:320px;background:#7f7f7f;border-radius:4px"></div>
<div class="a" style="left:95px;top:732px;width:1004px;height:15px;background:#fafafa"></div>
<div class="a" style="left:243px;top:736px;width:685px;height:8px;background:#7f7f7f;border-radius:4px"></div>
<div class="a" style="left:1099px;top:732px;width:55px;height:16px;background:#ebebeb"></div>
<span class="t" style="left:1119.40px;top:734.76px;font-size:12.1px;letter-spacing:0.000px;color:#111;word-spacing:-0.102px;">1 &lt; 10</span>
<div class="a" style="left:72px;top:747.6px;width:1082px;height:1.9px;background:#c6c6c6"></div>
<div class="a" style="left:72.5px;top:749.5px;width:1081px;height:21px;background:#fff;border-left:1px solid #c9c9c9;border-right:1px solid #c9c9c9;border-bottom:1.5px solid #c4c4c4"></div>
<div class="a" style="left:1138.5px;top:749.5px;width:14.5px;height:20px;background:#fafafa;border-left:1px solid #ececec"></div>
<div class="a" style="left:1142px;top:749.8px;width:8px;height:17px;background:#808080;border-radius:4px"></div>
<span class="t" style="left:77.80px;top:752.47px;font-size:12.2px;letter-spacing:0.780px;color:#0000c4;font-style:italic;-webkit-text-stroke:0.1px #0000c4;">Opdracht:</span>
<span class="t" style="left:140.80px;top:752.47px;font-size:12.2px;letter-spacing:0.896px;color:#0000c4;">offset</span>
<div class="a" style="left:72px;top:771px;width:1082px;height:27.5px;background:#ebebeb"></div>
<span class="t" style="left:73.20px;top:780.10px;font-size:12.4px;letter-spacing:0.359px;color:#111;">Kies lijn, boog, cirkel, ellips, spline of polylijn:</span>
<div class="a" style="left:342px;top:776px;width:785px;height:18px;background:#fff;border-top:1px solid #d6d6d6"></div>
<div class="a" style="left:1127.5px;top:772.3px;width:25.5px;height:25.5px;background:linear-gradient(#fbfbfb,#e9e9e9);border:1px solid #b4b4b4"></div>
<div class="a" style="left:1133.2px;top:780.3px;width:13.6px;height:9.7px;background:#ececec;border:1px solid #444;border-top:3px solid #000"></div>
<div class="a" style="left:1154px;top:108px;width:2px;height:691px;background:#efefef"></div>
<div class="a" style="left:1155px;top:108px;width:300px;height:21px;background:linear-gradient(#efefef,#dcdcdc);border-bottom:1px solid #c4c4c4"></div>
<span class="t" style="left:1297.40px;top:114.64px;font-size:10.7px;letter-spacing:0.533px;color:#1a1a1a;">Lagenlijst</span>
<div class="a" style="left:1155px;top:129px;width:300px;height:27px;background:#b4b4b4"></div>
<div class="a" style="left:1155.6px;top:130.8px;width:58.8px;height:24px;background:linear-gradient(#e5e5e5,#f7f7f7)"></div>
<div class="a" style="left:1215.6px;top:130.8px;width:58.8px;height:24px;background:linear-gradient(#e5e5e5,#f7f7f7)"></div>
<div class="a" style="left:1275.6px;top:130.8px;width:58.8px;height:24px;background:linear-gradient(#e5e5e5,#f7f7f7)"></div>
<div class="a" style="left:1335.6px;top:130.8px;width:58.8px;height:24px;background:linear-gradient(#e5e5e5,#f7f7f7)"></div>
<div class="a" style="left:1395.6px;top:130.8px;width:58.8px;height:24px;background:linear-gradient(#e5e5e5,#f7f7f7)"></div>
<div class="a" style="left:1155px;top:155.8px;width:299.5px;height:642.7px;background:#fff;border-left:1px solid #c8c8c8;border-right:1px solid #cdcdcd"></div>
<div class="a" style="left:1161px;top:163.2px;width:16px;height:8.6px;background:#fff;border:1px solid #000"></div>
<div class="a" style="left:1161px;top:183.2px;width:16px;height:8.6px;background:#f00;border:1px solid #000"></div>
<span class="t" style="left:1183.70px;top:160.99px;font-size:12.3px;letter-spacing:-0.509px;color:#000;">0</span>
<span class="t" style="left:1183.40px;top:180.89px;font-size:12.3px;letter-spacing:0.727px;color:#000;">Offset</span>
<svg style="left:1150px;top:100px" width="310" height="110" viewBox="1150 100 310 110">
<defs><linearGradient id="yPencil" x1="0" y1="0" x2="0" y2="1"><stop offset="0" stop-color="#ffe488"/><stop offset="0.5" stop-color="#e8a838"/><stop offset="1" stop-color="#b87818"/></linearGradient></defs>
<circle cx="1164" cy="118" r="6.8" fill="#626262"/><path d="M1161.2 115.2 L1166.8 120.8 M1166.8 115.2 L1161.2 120.8" stroke="#fff" stroke-width="1.8"/>
<circle cx="1182" cy="118" r="6.8" fill="#626262"/><rect x="1180.3" y="114.9" width="5.4" height="4.4" rx="1" fill="none" stroke="#fff" stroke-width="1.2"/><rect x="1178.2" y="117.1" width="5.4" height="4.4" rx="1" fill="#626262" stroke="#fff" stroke-width="1.2"/>
<g opacity="1"><path d="M1177.4 142.7 Q1179.6 139.1 1182.4 137.5 Q1185.4 136.3 1188.4 137.7 Q1191.2 139.5 1192.5 142.7 Q1191.4 145.1 1189.6 146.3 Q1185.6 148.5 1181.6 147.1 Q1178.8 145.7 1177.4 142.7 Z" fill="#000"/>
<ellipse cx="1185.2" cy="143.2" rx="4.7" ry="3.3" fill="#fff"/>
<circle cx="1185.2" cy="141.8" r="2.9" fill="#000"/><circle cx="1184.1" cy="141.2" r="0.65" fill="#fff" opacity="0.9"/></g>
<g opacity="1"><path d="M1237.4 142.7 Q1239.6 139.1 1242.4 137.5 Q1245.4 136.3 1248.4 137.7 Q1251.2 139.5 1252.5 142.7 Q1251.4 145.1 1249.6 146.3 Q1245.6 148.5 1241.6 147.1 Q1238.8 145.7 1237.4 142.7 Z" fill="#9c9c9c"/>
<ellipse cx="1245.2" cy="143.2" rx="4.7" ry="3.3" fill="#fff"/>
<circle cx="1245.2" cy="141.8" r="2.9" fill="#9c9c9c"/><circle cx="1244.1" cy="141.2" r="0.65" fill="#fff" opacity="0.9"/></g>
<path d="M1299.2 143 L1310.8 143 M1305 137.2 L1305 148.8" stroke="#a00000" stroke-width="3.4"/><path d="M1299.6 143 L1310.4 143 M1305 137.6 L1305 148.4" stroke="#f01010" stroke-width="2.4"/>
<rect x="1359" y="141.3" width="12" height="3.4" fill="#f01010" stroke="#a00000" stroke-width="0.6"/>
<g transform="translate(1417.6 149.6) rotate(-42.1)"><path d="M0 0 L3.6 -1.6 L16.7 -1.6 L16.7 1.6 L3.6 1.6 Z" fill="url(#yPencil)" stroke="#9a6a20" stroke-width="0.5"/><path d="M16.7 -1.6 L19.1 -1.6 Q19.7 0 19.1 1.6 L16.7 1.6 Z" fill="#e82020" stroke="#b02020" stroke-width="0.4"/><path d="M0 0 L3.6 -1.6 L3.6 1.6 Z" fill="#e8c898" stroke="#8a6a30" stroke-width="0.4"/><path d="M0 0 L1.4 -0.6 L1.4 0.6 Z" fill="#333"/></g>
<g transform="translate(1394.4 193.6) rotate(-44.1)"><path d="M0 0 L3.6 -1.6 L16.0 -1.6 L16.0 1.6 L3.6 1.6 Z" fill="url(#yPencil)" stroke="#9a6a20" stroke-width="0.5"/><path d="M16.0 -1.6 L18.4 -1.6 Q19.0 0 18.4 1.6 L16.0 1.6 Z" fill="#e82020" stroke="#b02020" stroke-width="0.4"/><path d="M0 0 L3.6 -1.6 L3.6 1.6 Z" fill="#e8c898" stroke="#8a6a30" stroke-width="0.4"/><path d="M0 0 L1.4 -0.6 L1.4 0.6 Z" fill="#333"/></g>
<g opacity="1"><path d="M1415.3000000000002 167.0 Q1417.5 163.4 1420.3000000000002 161.8 Q1423.3000000000002 160.60000000000002 1426.3000000000002 162.0 Q1429.1000000000001 163.8 1430.4 167.0 Q1429.3000000000002 169.4 1427.5 170.60000000000002 Q1423.5 172.8 1419.5 171.4 Q1416.7 170.0 1415.3000000000002 167.0 Z" fill="#000"/>
<ellipse cx="1423.1000000000001" cy="167.5" rx="4.7" ry="3.3" fill="#fff"/>
<circle cx="1423.1000000000001" cy="166.10000000000002" r="2.9" fill="#000"/><circle cx="1422.0" cy="165.5" r="0.65" fill="#fff" opacity="0.9"/></g>
<g opacity="1"><path d="M1415.3000000000002 187.0 Q1417.5 183.4 1420.3000000000002 181.8 Q1423.3000000000002 180.60000000000002 1426.3000000000002 182.0 Q1429.1000000000001 183.8 1430.4 187.0 Q1429.3000000000002 189.4 1427.5 190.60000000000002 Q1423.5 192.8 1419.5 191.4 Q1416.7 190.0 1415.3000000000002 187.0 Z" fill="#000"/>
<ellipse cx="1423.1000000000001" cy="187.5" rx="4.7" ry="3.3" fill="#fff"/>
<circle cx="1423.1000000000001" cy="186.10000000000002" r="2.9" fill="#000"/><circle cx="1422.0" cy="185.5" r="0.65" fill="#fff" opacity="0.9"/></g>
<path d="M1441.9 166.6 L1441.9 164.1 A3.1 3.3 0 0 1 1448.1 164.1 L1448.1 166.6" fill="none" stroke="#b4b4b4" stroke-width="1.5"/><rect x="1440" y="166.2" width="10" height="7.6" fill="#b4b4b4"/>
<path d="M1441.9 186.6 L1441.9 184.1 A3.1 3.3 0 0 1 1448.1 184.1 L1448.1 186.6" fill="none" stroke="#b4b4b4" stroke-width="1.5"/><rect x="1440" y="186.2" width="10" height="7.6" fill="#b4b4b4"/>
</svg>
<div class="a" style="left:1455px;top:108px;width:45px;height:691px;background:linear-gradient(90deg,#e9e9e9,#e0e0e0 50%,#cecece)"></div>
<div class="gd" style="left:1461.8px;top:116px"></div>
<div class="gd" style="left:1467.8px;top:116px"></div>
<div class="gd" style="left:1473.9px;top:116px"></div>
<div class="gd" style="left:1480.0px;top:116px"></div>
<div class="gd" style="left:1486.0px;top:116px"></div>
<div class="chk" style="left:1456px;top:120.4px;width:43px;height:42.4px"></div>
<div class="chk" style="left:1456px;top:417px;width:43px;height:42.7px"></div>
<div class="hsep" style="left:1458px;top:261px;width:42px"></div>
<div class="hsep" style="left:1458px;top:409px;width:42px"></div>
<svg style="left:1455px;top:108px" width="45" height="692" viewBox="1455 108 45 692">
<rect x="1463.2" y="127.2" width="27.4" height="27.4" fill="#fff" stroke="#111" stroke-width="0.8"/><rect x="1463.2" y="127.2" width="27.4" height="4.4" fill="#000"/><rect x="1464.1000000000001" y="128.1" width="3.2" height="2.9" fill="#fff"/>
<rect x="1463.2" y="174.4" width="27.4" height="27.4" fill="#fff" stroke="#111" stroke-width="0.8"/><rect x="1463.2" y="174.4" width="27.4" height="4.4" fill="#000"/><rect x="1464.1000000000001" y="175.3" width="3.2" height="2.9" fill="#fff"/>
<rect x="1463.2" y="220.4" width="27.4" height="27.4" fill="#fff" stroke="#111" stroke-width="0.8"/><rect x="1463.2" y="220.4" width="27.4" height="4.4" fill="#000"/><rect x="1464.1000000000001" y="221.3" width="3.2" height="2.9" fill="#fff"/>
<rect x="1463.2" y="276.3" width="27.4" height="27.4" fill="#fff" stroke="#111" stroke-width="0.8"/><rect x="1463.2" y="276.3" width="27.4" height="4.4" fill="#000"/><rect x="1464.1000000000001" y="277.2" width="3.2" height="2.9" fill="#fff"/>
<rect x="1463.2" y="322.4" width="27.4" height="27.4" fill="#fff" stroke="#111" stroke-width="0.8"/><rect x="1463.2" y="322.4" width="27.4" height="4.4" fill="#000"/><rect x="1464.1000000000001" y="323.29999999999995" width="3.2" height="2.9" fill="#fff"/>
<rect x="1463.2" y="368.5" width="27.4" height="27.4" fill="#fff" stroke="#111" stroke-width="0.8"/><rect x="1463.2" y="368.5" width="27.4" height="4.4" fill="#000"/><rect x="1464.1000000000001" y="369.4" width="3.2" height="2.9" fill="#fff"/>
<rect x="1463.2" y="424.3" width="27.4" height="27.4" fill="#fff" stroke="#111" stroke-width="0.8"/><rect x="1463.2" y="424.3" width="27.4" height="4.4" fill="#000"/><rect x="1464.1000000000001" y="425.2" width="3.2" height="2.9" fill="#fff"/>
<rect x="1463.2" y="471.2" width="27.4" height="27.4" fill="#fff" stroke="#111" stroke-width="0.8"/><rect x="1463.2" y="471.2" width="27.4" height="4.4" fill="#000"/><rect x="1464.1000000000001" y="472.09999999999997" width="3.2" height="2.9" fill="#fff"/>
<path d="M1470.5 141.8 L1479 136.2 L1479 144.2 L1470.5 149 Z" fill="#9a9a9a" stroke="#555" stroke-width="0.5"/><path d="M1472.2 141.8 L1481.6 136.3 L1481.6 144.5 L1472.2 149.3 Z" fill="#bdbdbd" stroke="#555" stroke-width="0.5"/><path d="M1474.2 141.8 L1484.6 136.5 L1484.6 144.8 L1474.2 149.6 Z" fill="#fff" stroke="#444" stroke-width="0.6"/><path d="M1477 147 L1482.4 138.8 L1482.6 144.6 M1478.6 144.6 L1482.6 143" fill="none" stroke="#f02020" stroke-width="0.7"/>
<rect x="1470.5" y="184.6" width="10.2" height="7" fill="#f7eec4" stroke="#555" stroke-width="0.7"/><circle cx="1479.3" cy="191.3" r="4.2" fill="#f3e8b8" fill-opacity="0.9" stroke="#555" stroke-width="0.7"/>
<rect x="1468.8" y="230.6" width="16.2" height="10.8" rx="2.2" fill="#f5f5f3" stroke="#b9c9ea" stroke-width="0.9"/>
<rect x="1466.2" y="284.4" width="4.4" height="3" fill="#000"/><rect x="1473.6" y="284.4" width="14" height="3" fill="#fff" stroke="#111" stroke-width="0.6"/>
<rect x="1466.2" y="290.5" width="4.4" height="3" fill="#000"/><rect x="1473.6" y="290.5" width="14" height="3" fill="#fff" stroke="#111" stroke-width="0.6"/>
<rect x="1466.2" y="296.5" width="4.4" height="3" fill="#000"/><rect x="1473.6" y="296.5" width="14" height="3" fill="#fff" stroke="#111" stroke-width="0.6"/>
<path d="M1470 332.6 L1475.9 338.4 L1475.9 343.2 L1478.6 345 L1478.6 338.4 L1484.3 332.6 Z" fill="#aaa" stroke="#444" stroke-width="0.6"/><ellipse cx="1477.1" cy="332.4" rx="7.2" ry="1.5" fill="#888" stroke="#444" stroke-width="0.6"/>
<path d="M1469.2 377.4 L1469.2 390.5 L1474.2 387.4 L1474.2 380.2 Z" fill="#f4f4f4" stroke="#333" stroke-width="0.7"/><rect x="1474.2" y="380.4" width="5" height="7" fill="#d8d8d8" stroke="#777" stroke-width="0.5"/><rect x="1479.2" y="380.4" width="5.4" height="7" rx="1" fill="#8c8c8c"/><path d="M1467 383.7 L1487.4 383.7" stroke="#f08a8a" stroke-width="0.7" stroke-dasharray="2.4 1"/>
<path d="M1465.6 432.80 h10.8" stroke="#a8a8a8" stroke-width="1.1" stroke-dasharray="2.2 0.5 3 0.4 1.6 0.6"/>
<path d="M1465.6 436.15 h9.6" stroke="#a8a8a8" stroke-width="1.1" stroke-dasharray="2.2 0.5 3 0.4 1.6 0.6"/>
<path d="M1465.6 439.50 h11.6" stroke="#a8a8a8" stroke-width="1.1" stroke-dasharray="2.2 0.5 3 0.4 1.6 0.6"/>
<path d="M1465.6 442.85 h12.4" stroke="#a8a8a8" stroke-width="1.1" stroke-dasharray="2.2 0.5 3 0.4 1.6 0.6"/>
<path d="M1463.2 446.8 h27.4" stroke="#111" stroke-width="0.7"/><path d="M1466 449.4 h1.6 M1472.6 449.4 h15" stroke="#777" stroke-width="1.2" stroke-dasharray="1.4 0.4"/>
<rect x="1470.6" y="480.6" width="12.6" height="13.2" rx="0.8" fill="#c98a22" stroke="#a86c12" stroke-width="0.5"/><rect x="1472.2" y="481.8" width="9.4" height="10.8" fill="#f6f6f6"/><rect x="1474" y="479.4" width="5.8" height="2.8" rx="0.6" fill="#a4a496" stroke="#66665c" stroke-width="0.4"/><path d="M1473.6 485 h6.6 M1473.6 486.8 h6 M1473.6 488.6 h6.6 M1473.6 490.4 h4" stroke="#c4c4c4" stroke-width="0.6"/><path d="M1481.6 490 L1479 492.6 L1481.6 492.6 Z" fill="#aaa"/>
</svg>
<div class="a" style="left:0;top:798.5px;width:1500px;height:46px;background:#dedede"></div>
<span class="t" style="left:2.30px;top:808.03px;font-size:9.3px;letter-spacing:0.420px;color:#111;">47.7778,5.0222</span>
<span class="t" style="left:2.30px;top:828.53px;font-size:9.3px;letter-spacing:0.351px;color:#111;">@47.7778,5.0222</span>
<div class="a" style="left:253.5px;top:802px;width:1px;height:40px;background:#8a8a8a"></div>
<span class="t" style="left:256.40px;top:808.03px;font-size:9.3px;letter-spacing:0.568px;color:#111;">48.041&lt;6°</span>
<span class="t" style="left:256.40px;top:828.53px;font-size:9.3px;letter-spacing:0.427px;color:#111;">@48.041&lt;6°</span>
<div class="a" style="left:506.5px;top:818.7px;width:6px;height:6px;border-radius:3px;background:#d0d0d0"></div>
<div class="a" style="left:940px;top:818.7px;width:6px;height:6px;border-radius:3px;background:#d0d0d0"></div>
<div class="a" style="left:1269.5px;top:818.7px;width:6px;height:6px;border-radius:3px;background:#d0d0d0"></div>
<span class="t" style="left:531.00px;top:812.04px;font-size:9.4px;letter-spacing:0.364px;color:#111;">Kies lijn, boog, cirkel, ellips, spline of</span>
<span class="t" style="left:667.00px;top:823.34px;font-size:9.4px;letter-spacing:0.374px;color:#111;">polylijn</span>
<span class="t" style="left:754.70px;top:818.14px;font-size:9.4px;letter-spacing:0.206px;color:#111;">Annuleer</span>
<span class="t" style="left:949.50px;top:818.14px;font-size:9.4px;letter-spacing:0.378px;color:#111;">Geen objecten geselecteerd.</span>
<svg style="left:716px;top:805px" width="20" height="31"><path d="M1.2 12 C1.2 4 4.5 1 10 1 C15.5 1 18.8 4 18.8 12 L18.8 20 C18.8 27 15 30 10 30 C5 30 1.2 27 1.2 20 Z" fill="#fff" stroke="#222" stroke-width="1.2"/><path d="M1.2 12.5 C5 11.8 8 12.6 10 13.3 C12 12.6 15 11.8 18.8 12.5" fill="none" stroke="#333" stroke-width="0.9"/><path d="M10 1 L10 3.2 M10 9.2 L10 13.3" stroke="#333" stroke-width="0.9"/><rect x="8.7" y="3.2" width="2.6" height="6" rx="1.3" fill="#fff" stroke="#333" stroke-width="0.9"/></svg>
</div></body></html>
